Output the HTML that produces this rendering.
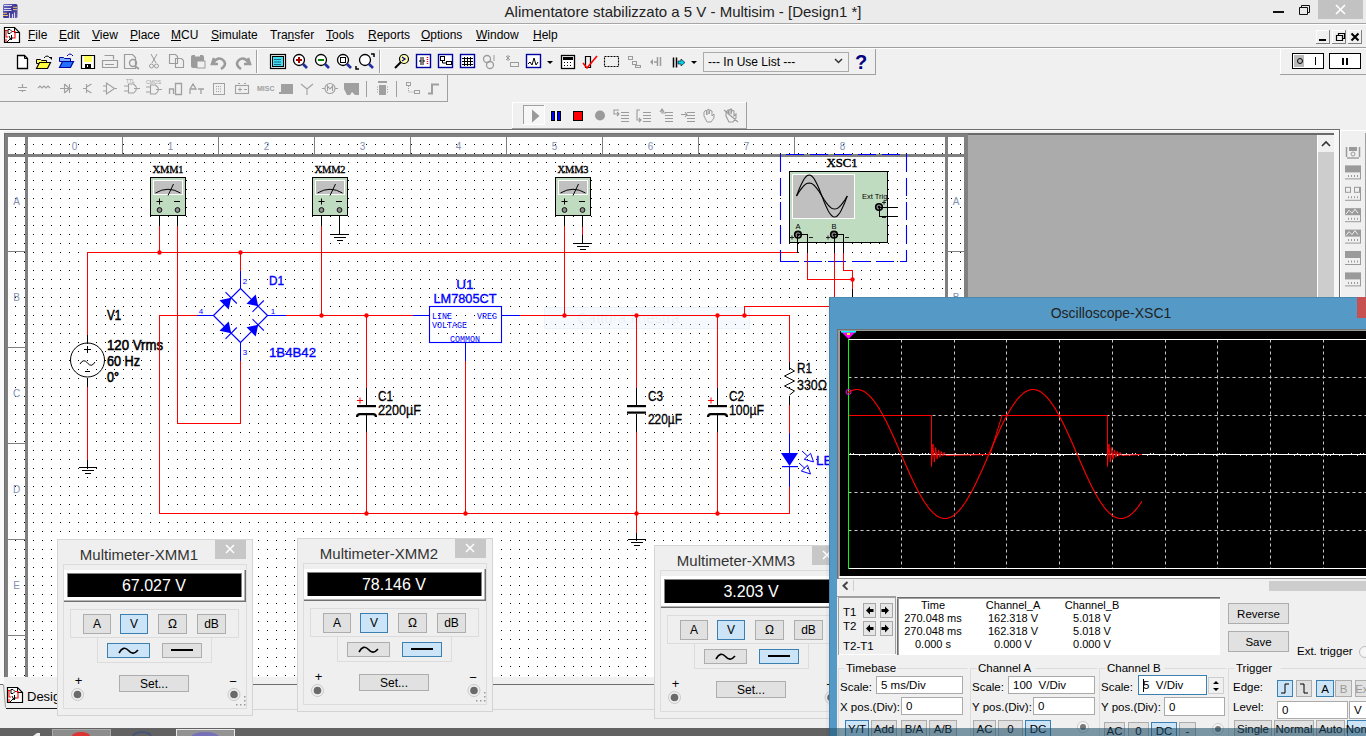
<!DOCTYPE html><html><head><meta charset="utf-8"><style>html,body{margin:0;padding:0;width:1366px;height:736px;overflow:hidden;background:#f0f0f0}svg{display:block}</style></head><body>
<svg width="1366" height="736" viewBox="0 0 1366 736" font-family='"Liberation Sans", sans-serif'>
<rect x="0" y="0" width="1366" height="736" fill="#f0f0f0" />
<rect x="0" y="0" width="1366" height="23" fill="#ebebeb" />
<rect x="0" y="23" width="1366" height="1" fill="#a6a6a6"/>
<rect x="0" y="24" width="1366" height="1" fill="#ffffff"/>
<defs><linearGradient id="appg" x1="0" y1="0" x2="1" y2="1"><stop offset="0" stop-color="#7a78c8"/><stop offset="0.5" stop-color="#3a3495"/><stop offset="1" stop-color="#6a68b8"/></linearGradient></defs>
<rect x="3" y="4" width="14.5" height="14" rx="1.5" fill="url(#appg)"/>
<path d="M4,5.5 h8 M4,8.5 h7 M3.5,10.5 h8" stroke="#e8e8f8" stroke-width="1" opacity="0.9"/>
<path d="M13,7.3 h4 M13,9.6 h4 M3,13.3 h4 M3,15.5 h5" stroke="#f0c060" stroke-width="1"/>
<path d="M9.5,13 v5 M12.5,14 v4 M14.5,12.5 v5.5" stroke="#d8d8f0" stroke-width="1"/>
<text x="683" y="17" font-size="15" fill="#222" text-anchor="middle" font-weight="normal" font-family='"Liberation Sans", sans-serif' >Alimentatore stabilizzato a 5 V - Multisim - [Design1 *]</text>
<rect x="1273" y="11" width="11" height="2" fill="#111" />
<path d="M1299.5,7.5 h8 v7 h-8 z M1301.5,7.5 v-2 h8 v7 h-2" fill="none" stroke="#111" stroke-width="1"/>
<rect x="1318" y="0" width="45" height="19" fill="#c2c2c2" />
<path d="M1336,5 L1345,14 M1345,5 L1336,14" stroke="#fff" stroke-width="1.6"/>
<text x="28" y="39" font-size="12" fill="#000" text-anchor="start" font-weight="normal" font-family='"Liberation Sans", sans-serif' >File</text>
<rect x="28.0" y="40" width="7.3" height="1" fill="#000"/>
<text x="59" y="39" font-size="12" fill="#000" text-anchor="start" font-weight="normal" font-family='"Liberation Sans", sans-serif' >Edit</text>
<rect x="59.0" y="40" width="8.0" height="1" fill="#000"/>
<text x="92" y="39" font-size="12" fill="#000" text-anchor="start" font-weight="normal" font-family='"Liberation Sans", sans-serif' >View</text>
<rect x="92.0" y="40" width="8.0" height="1" fill="#000"/>
<text x="130" y="39" font-size="12" fill="#000" text-anchor="start" font-weight="normal" font-family='"Liberation Sans", sans-serif' >Place</text>
<rect x="130.0" y="40" width="8.0" height="1" fill="#000"/>
<text x="171" y="39" font-size="12" fill="#000" text-anchor="start" font-weight="normal" font-family='"Liberation Sans", sans-serif' >MCU</text>
<rect x="171.0" y="40" width="10.0" height="1" fill="#000"/>
<text x="211" y="39" font-size="12" fill="#000" text-anchor="start" font-weight="normal" font-family='"Liberation Sans", sans-serif' >Simulate</text>
<rect x="211.0" y="40" width="8.0" height="1" fill="#000"/>
<text x="270" y="39" font-size="12" fill="#000" text-anchor="start" font-weight="normal" font-family='"Liberation Sans", sans-serif' >Transfer</text>
<rect x="287.6" y="40" width="6.7" height="1" fill="#000"/>
<text x="326" y="39" font-size="12" fill="#000" text-anchor="start" font-weight="normal" font-family='"Liberation Sans", sans-serif' >Tools</text>
<rect x="326.0" y="40" width="7.3" height="1" fill="#000"/>
<text x="368" y="39" font-size="12" fill="#000" text-anchor="start" font-weight="normal" font-family='"Liberation Sans", sans-serif' >Reports</text>
<rect x="368.0" y="40" width="8.7" height="1" fill="#000"/>
<text x="421" y="39" font-size="12" fill="#000" text-anchor="start" font-weight="normal" font-family='"Liberation Sans", sans-serif' >Options</text>
<rect x="421.0" y="40" width="9.3" height="1" fill="#000"/>
<text x="476" y="39" font-size="12" fill="#000" text-anchor="start" font-weight="normal" font-family='"Liberation Sans", sans-serif' >Window</text>
<rect x="476.0" y="40" width="11.3" height="1" fill="#000"/>
<text x="533" y="39" font-size="12" fill="#000" text-anchor="start" font-weight="normal" font-family='"Liberation Sans", sans-serif' >Help</text>
<rect x="533.0" y="40" width="8.7" height="1" fill="#000"/>
<path d="M4.5,27.5 h10 l5,5 v10 h-15 z" fill="#fff" stroke="#000" stroke-width="1.2"/>
<path d="M14.5,27.5 v5 h5" fill="none" stroke="#000" stroke-width="1"/>
<path d="M5,30.5 h2.5 M6,31 v6 h2 M12,31.5 h3 v6.5 h-2 M6,39 v3" fill="none" stroke="#f00" stroke-width="1.1"/>
<path d="M8,29.5 h2 l2,2 l-2,2 h-2 z M9,36 l2,4 M11.5,35 v5 M9,40 l2,-2 h2 M7,42 l2,-2" fill="none" stroke="#000" stroke-width="1"/>
<rect x="1316" y="30" width="14" height="14" fill="#f0f0f0" />
<rect x="1316" y="30" width="14" height="1" fill="#fff"/>
<rect x="1316" y="30" width="1" height="14" fill="#fff"/>
<rect x="1316" y="43" width="14" height="1" fill="#808080"/>
<rect x="1329" y="30" width="1" height="14" fill="#808080"/>
<rect x="1332" y="30" width="14" height="14" fill="#f0f0f0" />
<rect x="1332" y="30" width="14" height="1" fill="#fff"/>
<rect x="1332" y="30" width="1" height="14" fill="#fff"/>
<rect x="1332" y="43" width="14" height="1" fill="#808080"/>
<rect x="1345" y="30" width="1" height="14" fill="#808080"/>
<rect x="1348" y="30" width="14" height="14" fill="#f0f0f0" />
<rect x="1348" y="30" width="14" height="1" fill="#fff"/>
<rect x="1348" y="30" width="1" height="14" fill="#fff"/>
<rect x="1348" y="43" width="14" height="1" fill="#808080"/>
<rect x="1361" y="30" width="1" height="14" fill="#808080"/>
<rect x="1319" y="39" width="7" height="2" fill="#000" />
<path d="M1336.5,35.5 h6 v5 h-6 z M1338.5,35.5 v-2 h6 v5 h-2" fill="none" stroke="#000" stroke-width="1.2"/>
<path d="M1351.5,33.5 L1358.5,40.5 M1358.5,33.5 L1351.5,40.5" stroke="#000" stroke-width="2"/>
<rect x="0" y="47" width="1366" height="1" fill="#a0a0a0"/>
<rect x="0" y="48" width="1366" height="1" fill="#ffffff"/>
<rect x="0" y="74" width="875" height="1" fill="#a0a0a0"/>
<rect x="875" y="49" width="1" height="26" fill="#a0a0a0"/>
<rect x="0" y="101" width="448" height="1" fill="#a0a0a0"/>
<rect x="447" y="75" width="1" height="27" fill="#a0a0a0"/>
<rect x="512" y="102" width="235" height="1" fill="#ffffff"/>
<rect x="512" y="102" width="1" height="26" fill="#ffffff"/>
<rect x="512" y="128" width="235" height="1" fill="#a0a0a0"/>
<rect x="746" y="102" width="1" height="27" fill="#a0a0a0"/>
<rect x="1280" y="48" width="86" height="1" fill="#ffffff"/>
<rect x="1280" y="48" width="1" height="26" fill="#ffffff"/>
<rect x="1280" y="74" width="86" height="1" fill="#a0a0a0"/>
<rect x="703.5" y="52.5" width="145" height="19" fill="#f0f0f0" stroke="#aaaaaa" stroke-width="1" />
<text x="708" y="66" font-size="12" fill="#000" text-anchor="start" font-weight="normal" font-family='"Liberation Sans", sans-serif' >--- In Use List ---</text>
<path d="M835,59 l3.5,3.5 l3.5,-3.5" fill="none" stroke="#333" stroke-width="1.5"/>
<text x="855" y="69" font-size="20" fill="#000080" text-anchor="start" font-weight="bold" font-family='"Liberation Sans", sans-serif' >?</text>
<rect x="1292.5" y="53.5" width="31" height="15" fill="#fff" stroke="#000"/>
<path d="M1294,55 h10 v12 h-10 z" fill="#bbb"/>
<circle cx="1300" cy="61" r="2.5" fill="none" stroke="#000"/>
<rect x="1315" y="57" width="1" height="8" fill="#000" />
<rect x="1329.5" y="53.5" width="31" height="15" fill="#fff" stroke="#000"/>
<rect x="1342" y="58" width="2" height="7" fill="#000" />
<rect x="1346" y="58" width="2" height="7" fill="#000" />
<rect x="0" y="129" width="1340" height="1" fill="#6d6d6d"/>
<rect x="0" y="130" width="1340" height="1" fill="#ffffff"/>
<path d="M17.5,55.5 h7 l3,3 v10 h-10 z" fill="#fff" stroke="#000" stroke-width="1.3"/>
<path d="M24.5,55.5 v3 h3" fill="none" stroke="#000"/>
<path d="M36.5,59.5 h4 l1,1 h5 v3 h-10 z" fill="#ffff60" stroke="#000"/>
<path d="M36.5,68.5 l3,-6 h11 l-3,6 z" fill="#ffff40" stroke="#000" stroke-width="1.2"/>
<path d="M44,58 q3,-4 6,0" fill="none" stroke="#000"/><path d="M49,57 h3 v3 z" fill="#000"/>
<path d="M59.5,57.5 h4 l1,1 h6 v3 h-11 z" fill="#80b0ff" stroke="#0000a0"/>
<path d="M59.5,67.5 l3,-6 h11 l-3,6 z" fill="#2070ff" stroke="#0000a0" stroke-width="1.2"/>
<path d="M67,56 q3,-4 6,0" fill="none" stroke="#0000a0"/>
<path d="M81.5,55.5 h13 v13 h-13 z" fill="#fff" stroke="#000" stroke-width="1.2"/>
<rect x="84" y="56" width="8" height="6" fill="#ffff60"/><rect x="85" y="64" width="6" height="5" fill="#000"/><rect x="87" y="65" width="1" height="2" fill="#fff"/>
<path d="M104.5,55.5 h9 v4 M102.5,60.5 h15 v7 h-15 z M105,64.5 h9" fill="none" stroke="#9b9b9b" stroke-width="1.2"/>
<path d="M124.5,54.5 h8 l3,3 v11 h-11 z" fill="none" stroke="#9b9b9b" stroke-width="1.2"/><circle cx="133" cy="63" r="3.5" fill="none" stroke="#9b9b9b" stroke-width="1.4"/><path d="M135,66 l4,3" stroke="#9b9b9b" stroke-width="1.6"/>
<path d="M151,54 l5,9 M157,54 l-5,9" stroke="#9b9b9b" stroke-width="1"/><circle cx="151.5" cy="66" r="2" fill="none" stroke="#9b9b9b"/><circle cx="156.5" cy="66" r="2" fill="none" stroke="#9b9b9b"/>
<path d="M169.5,54.5 h6 l2,2 v7 h-8 z M175.5,58.5 h6 l2,2 v7 h-8 z" fill="#f0f0f0" stroke="#9b9b9b" stroke-width="1.1"/>
<rect x="191" y="55" width="13" height="13" rx="2" fill="#9b9b9b"/><rect x="197" y="61" width="8" height="7" fill="#f0f0f0" stroke="#9b9b9b"/><rect x="195" y="55" width="5" height="1.5" fill="#f0f0f0"/>
<path d="M214,58 l-2,6 l6,0 M213,63 q6,-8 11,-2 q3,4 -3,8" fill="none" stroke="#9b9b9b" stroke-width="2.6"/>
<path d="M248,58 l2,6 l-6,0 M249,63 q-6,-8 -11,-2 q-3,4 3,8" fill="none" stroke="#9b9b9b" stroke-width="2.6"/>
<rect x="256" y="50" width="1" height="23" fill="#a0a0a0"/>
<rect x="257" y="50" width="1" height="23" fill="#ffffff"/>
<rect x="270.5" y="54.5" width="15" height="14" fill="none" stroke="#000" stroke-width="1.2"/><rect x="272.5" y="56.5" width="11" height="10" fill="#40e0f0" stroke="#000"/>
<path d="M274,59.5 h7 M274,62 h7 M274,64.5 h7" stroke="#206080" stroke-width="1"/>
<circle cx="299" cy="60" r="5.5" fill="#fff" stroke="#000" stroke-width="1.3"/><path d="M303,64 l4,4" stroke="#2030a0" stroke-width="2.6"/>
<path d="M296,60 h6 M299,57 v6" stroke="#a00000" stroke-width="2"/>
<circle cx="321" cy="60" r="5.5" fill="#fff" stroke="#000" stroke-width="1.3"/><path d="M325,64 l4,4" stroke="#2030a0" stroke-width="2.6"/>
<path d="M318,60 h6" stroke="#008000" stroke-width="2"/>
<circle cx="343" cy="60" r="5.5" fill="#fff" stroke="#000" stroke-width="1.3"/><path d="M347,64 l4,4" stroke="#2030a0" stroke-width="2.6"/>
<rect x="340.5" y="57.5" width="5" height="5" fill="none" stroke="#000"/>
<circle cx="365" cy="60" r="5.5" fill="#fff" stroke="#000" stroke-width="1.3"/><path d="M369,64 l4,4" stroke="#2030a0" stroke-width="2.6"/>
<path d="M371,54 h3 v3 M359,69 h-3 v-3" fill="none" stroke="#000" stroke-width="1.5"/>
<rect x="379" y="50" width="1" height="23" fill="#a0a0a0"/>
<rect x="380" y="50" width="1" height="23" fill="#ffffff"/>
<circle cx="404" cy="59" r="4.5" fill="#ffffa0" stroke="#000" stroke-width="1.2"/><path d="M401,62 l-6,6" stroke="#000" stroke-width="2"/><path d="M402,57 l3,2 l-3,2" fill="none" stroke="#0000a0" stroke-width="1.3"/>
<rect x="416.5" y="54.5" width="14" height="13" fill="#fff" stroke="#0000a0" stroke-width="1.4"/>
<rect x="438.5" y="54.5" width="14" height="13" fill="#fff" stroke="#0000a0" stroke-width="1.4"/>
<rect x="460.5" y="54.5" width="14" height="13" fill="#fff" stroke="#0000a0" stroke-width="1.4"/>
<rect x="526.5" y="54.5" width="14" height="13" fill="#fff" stroke="#0000a0" stroke-width="1.4"/>
<path d="M419,61 h2 M421,57 v8 M423,57 v8 M423,61 h2" stroke="#000" stroke-width="1"/><path d="M427.5,57 v8" stroke="#e00000" stroke-width="1.5" stroke-dasharray="1 1"/>
<rect x="440.5" y="56.5" width="4" height="4" fill="none" stroke="#000"/><rect x="446.5" y="61.5" width="5" height="3" fill="none" stroke="#000"/><path d="M442.5,60 v3 h4" fill="none" stroke="#000"/>
<path d="M462,58.5 h11 M462,61.5 h11 M462,64.5 h11 M464.5,57 v9 M467.5,57 v9 M470.5,57 v9" stroke="#000" stroke-width="1"/>
<path d="M528,64 l2,-2 l2,3 l2,-7 l2,7 l2,-3" fill="none" stroke="#000" stroke-width="1"/>
<circle cx="487" cy="59" r="3.5" fill="none" stroke="#9b9b9b" stroke-width="1.3"/><circle cx="490" cy="65" r="3.5" fill="none" stroke="#9b9b9b" stroke-width="1.3"/><path d="M494,55 v6" stroke="#9b9b9b"/>
<path d="M506,56 l4,4 M510,56 l-4,4 M508,55 v6" stroke="#9b9b9b"/><rect x="510.5" y="62.5" width="8" height="4" fill="none" stroke="#9b9b9b"/>
<path d="M547,61 h6 l-3,3 z" fill="#000"/>
<rect x="561.5" y="55.5" width="13" height="13" fill="#fff" stroke="#000" stroke-width="1.3"/><rect x="563" y="57" width="10" height="3" fill="#000"/>
<path d="M564,62.5 h1 M567,62.5 h1 M570,62.5 h1 M564,65.5 h1 M567,65.5 h1 M570,65.5 h1" stroke="#000" stroke-width="1.2"/>
<path d="M585.5,56.5 h5 v11 h-5 z" fill="none" stroke="#000" stroke-width="1.2"/><path d="M583,63 l4,5 l10,-12" fill="none" stroke="#ff0000" stroke-width="1.6"/>
<rect x="604.5" y="56.5" width="14" height="10" fill="none" stroke="#000" stroke-width="1.1" stroke-dasharray="2 1"/>
<rect x="628.5" y="56.5" width="4" height="3" fill="none" stroke="#9b9b9b"/><rect x="632.5" y="61.5" width="4" height="3" fill="none" stroke="#9b9b9b"/><rect x="635.5" y="65.5" width="5" height="2" fill="none" stroke="#9b9b9b"/>
<path d="M650,62 l3,-3 v6 z" fill="#9b9b9b"/><path d="M654,62 h3 M657.5,57 v9 M660.5,57 v9" stroke="#9b9b9b" stroke-width="1.5"/>
<path d="M673.5,57.5 v10 M676.5,57.5 v10" stroke="#000" stroke-width="1.5"/><path d="M678,61 h3 v-2 l4,3.5 l-4,3.5 v-2 h-3 z" fill="#00d0f0" stroke="#000" stroke-width="0.6"/>
<path d="M691,61 h6 l-3,3 z" fill="#000"/>
<path d="M18,87.5 h9 M22.5,84 v3 M19,90.5 h7 M22.5,90 v2" stroke="#a0a0a0" stroke-width="1.2"/>
<path d="M38,88 l2,-2 l2,2 l2,-2 l2,2 l2,-2 l2,2" fill="none" stroke="#a0a0a0" stroke-width="1.2"/>
<path d="M60,88.5 h12 M64.5,84 v9 M64.5,84 l5,4.5 l-5,4.5 M69.5,84 v9" fill="none" stroke="#a0a0a0" stroke-width="1.1"/>
<path d="M86.5,84 v9 M83,88.5 h3.5 M86.5,87 l5,-3 M86.5,90 l5,3" fill="none" stroke="#a0a0a0" stroke-width="1.1"/>
<path d="M106.5,83 v11 l8,-5.5 z M103,86 h3 M103,91 h3 M114,88.5 h3" fill="none" stroke="#a0a0a0" stroke-width="1.1"/>
<path d="M128.5,84 h5 q6,4.5 0,9 h-5 z M124,86 h4 M124,91 h4 M134,88.5 h6" fill="none" stroke="#a0a0a0" stroke-width="1.1"/><text x="126" y="83" font-size="5" fill="#a0a0a0">TTL</text>
<path d="M150.5,85 h5 q6,4.5 0,9 h-5 z M146,87 h4 M146,92 h4 M156,89.5 h6" fill="none" stroke="#a0a0a0" stroke-width="1.1"/><text x="146" y="84" font-size="5" fill="#a0a0a0">CMOS</text>
<path d="M169.5,94 v-5 h4 v5 M175.5,83.5 h6 v11 h-6 z" fill="none" stroke="#a0a0a0" stroke-width="1.3"/>
<path d="M193,84 l-3,5 h6 z M190,94 v-4 M198,89 h6 M201,89 v5" fill="none" stroke="#a0a0a0" stroke-width="1.3"/>
<rect x="213.5" y="83.5" width="11" height="11" fill="none" stroke="#a0a0a0"/><path d="M216,86.5 h6 M216,89 h6 M216,91.5 h6" stroke="#a0a0a0" stroke-dasharray="1 1"/>
<rect x="235.5" y="85.5" width="13" height="8" fill="none" stroke="#a0a0a0" stroke-width="1.1"/><path d="M238,83.5 h2 M244,83.5 h2 M238,89.5 h4 M240,87.5 v4 M244,89.5 h3" stroke="#a0a0a0"/>
<text x="257" y="91" font-size="7" fill="#a0a0a0" font-weight="bold">MISC</text>
<rect x="281" y="84" width="12" height="8" fill="#a0a0a0"/><rect x="279" y="92" width="14" height="2" fill="#a0a0a0"/>
<path d="M301,84 l6,5 l6,-5 M307,89 v6" fill="none" stroke="#a0a0a0" stroke-width="1.1"/>
<circle cx="330" cy="88.5" r="5" fill="none" stroke="#a0a0a0" stroke-width="1.1"/><path d="M322,88.5 h3 M335,88.5 h3 M327.5,91 v-5 l2.5,3 l2.5,-3 v5" fill="none" stroke="#a0a0a0" stroke-width="1.1"/>
<path d="M344,83 h15 v12 h-4 l-3,-3 l-2,3 h-3 l-3,-6 z" fill="#a0a0a0"/>
<rect x="366" y="81" width="1" height="16" fill="#a0a0a0"/>
<rect x="379" y="85" width="7" height="10" fill="#a0a0a0"/><path d="M377,87 h11 M377,89.5 h11 M377,92 h11" stroke="#a0a0a0" stroke-dasharray="1 1"/><rect x="378" y="81" width="9" height="2" fill="#a0a0a0"/>
<rect x="396" y="81" width="1" height="16" fill="#a0a0a0"/>
<rect x="406.5" y="82.5" width="4" height="3" fill="none" stroke="#a0a0a0"/><rect x="414.5" y="90.5" width="5" height="3" fill="none" stroke="#a0a0a0"/><path d="M408.5,86 v6 h5" fill="none" stroke="#a0a0a0" stroke-dasharray="1 1"/>
<path d="M428,93.5 h4 v-9 h7" fill="none" stroke="#a0a0a0" stroke-width="2"/>
<rect x="523" y="105" width="21" height="20" fill="#f7f7f7"/>
<rect x="523" y="105" width="21" height="1" fill="#a0a0a0"/>
<rect x="523" y="105" width="1" height="20" fill="#a0a0a0"/>
<rect x="523" y="124" width="22" height="1" fill="#ffffff"/>
<rect x="544" y="105" width="1" height="20" fill="#ffffff"/>
<path d="M532,109.5 l7.5,6.5 l-7.5,6.5 z" fill="#9a9a9a"/>
<rect x="551.5" y="111.5" width="3" height="9" fill="#0000ff" stroke="#000"/><rect x="557.5" y="111.5" width="3" height="9" fill="#0000ff" stroke="#000"/>
<rect x="573.5" y="111.5" width="9" height="9" fill="#ff0000" stroke="#000"/>
<circle cx="600" cy="115.5" r="5" fill="#9a9a9a"/>
<path d="M621,112.5 h8 M621,115.5 h8 M621,118.5 h8 M621,121.5 h8" stroke="#9b9b9b" stroke-width="1"/>
<path d="M643,112.5 h8 M643,115.5 h8 M643,118.5 h8 M643,121.5 h8" stroke="#9b9b9b" stroke-width="1"/>
<path d="M665,112.5 h8 M665,115.5 h8 M665,118.5 h8 M665,121.5 h8" stroke="#9b9b9b" stroke-width="1"/>
<path d="M687,112.5 h8 M687,115.5 h8 M687,118.5 h8 M687,121.5 h8" stroke="#9b9b9b" stroke-width="1"/>
<path d="M619,110 h-5 v4 h5 M617,112 l2,2 l-2,2" fill="none" stroke="#9b9b9b" stroke-width="1.1"/>
<path d="M640,110 h-3 v10 h3 M639,118 l2,2 l-2,2" fill="none" stroke="#9b9b9b" stroke-width="1.1"/>
<path d="M660,112 l2,-3 l2,3 M662,109 v4 h4" fill="none" stroke="#9b9b9b" stroke-width="1.1"/>
<path d="M681,114.5 h6 M685,112 l2,2.5 l-2,2.5" fill="none" stroke="#9b9b9b" stroke-width="1.1"/>
<path d="M704,116 v-4 l2,-2 l1,5 v-5 l2,-1 v5 l1,-4 l2,1 v5 l2,-2 v4 l-3,4 h-4 z" fill="none" stroke="#9b9b9b" stroke-width="1"/>
<path d="M726,116 v-4 l2,-2 l1,5 v-5 l2,-1 v5 l1,-4 l2,1 v5 l2,-2 v4 l-3,4 h-4 z M724,110 l14,12" fill="none" stroke="#9b9b9b" stroke-width="1.1"/>
<rect x="968" y="131" width="372" height="4" fill="#f0f0f0" />
<rect x="968" y="133" width="366" height="2" fill="#6a6a6a" />
<rect x="968" y="135" width="349" height="162" fill="#ababab" />
<rect x="1317" y="135" width="1" height="162" fill="#ffffff"/>
<rect x="1318" y="135" width="16" height="162" fill="#cdcdcd" />
<rect x="1318" y="135" width="16" height="17" fill="#f0f0f0" />
<path d="M1322,146 l4,-4 l4,4" fill="none" stroke="#333" stroke-width="1.6"/>
<rect x="1334" y="131" width="5" height="166" fill="#f7f7f7" />
<rect x="1339" y="129" width="1" height="168" fill="#6d6d6d"/>
<rect x="1340" y="130" width="26" height="167" fill="#f0f0f0" />
<rect x="1340" y="130" width="26" height="1" fill="#ffffff"/>
<rect x="1340" y="130" width="1" height="167" fill="#ffffff"/>
<rect x="1365" y="133" width="1" height="164" fill="#a0a0a0"/>
<path d="M1346.5,147 v10 M1359.5,147 v10" stroke="#9a9a9a" stroke-width="1.5"/><rect x="1349" y="147" width="8" height="4" fill="#9a9a9a"/><circle cx="1353" cy="154" r="2" fill="none" stroke="#9a9a9a"/><path d="M1347,158 h12" stroke="#9a9a9a" stroke-width="1.4"/>
<rect x="1345" y="165.4" width="15" height="7" fill="#9a9a9a"/>
<path d="M1345,178.9 h15 M1360.5,165.4 v14" stroke="#9a9a9a" stroke-width="1"/>
<path d="M1348,175.9 h1 M1351,175.9 h1 M1354,175.9 h1 M1357,175.9 h1" stroke="#9a9a9a" stroke-width="2"/>
<rect x="1345.5" y="187.3" width="5" height="5" fill="none" stroke="#9a9a9a"/><rect x="1354.5" y="187.3" width="5" height="5" fill="none" stroke="#9a9a9a"/>
<path d="M1345,200.3 h15 M1360.5,186.8 v14" stroke="#9a9a9a" stroke-width="1"/>
<path d="M1348,197.3 h1 M1351,197.3 h1 M1354,197.3 h1 M1357,197.3 h1" stroke="#9a9a9a" stroke-width="2"/>
<rect x="1345" y="208.2" width="15" height="7" fill="#9a9a9a"/>
<path d="M1346,214.2 l3,-4 l3,3 l3,-4 l3,4" fill="none" stroke="#f0f0f0" stroke-width="1"/>
<path d="M1345,221.7 h15 M1360.5,208.2 v14" stroke="#9a9a9a" stroke-width="1"/>
<path d="M1348,218.7 h1 M1351,218.7 h1 M1354,218.7 h1 M1357,218.7 h1" stroke="#9a9a9a" stroke-width="2"/>
<rect x="1345" y="229.6" width="15" height="7" fill="#9a9a9a"/>
<path d="M1346,235.6 l3,-4 l3,3 l3,-4 l3,4" fill="none" stroke="#f0f0f0" stroke-width="1"/>
<path d="M1345,243.1 h15 M1360.5,229.6 v14" stroke="#9a9a9a" stroke-width="1"/>
<path d="M1348,240.1 h1 M1351,240.1 h1 M1354,240.1 h1 M1357,240.1 h1" stroke="#9a9a9a" stroke-width="2"/>
<rect x="1345" y="251.0" width="15" height="7" fill="#9a9a9a"/>
<path d="M1345,264.5 h15 M1360.5,251.0 v14" stroke="#9a9a9a" stroke-width="1"/>
<path d="M1348,261.5 h1 M1351,261.5 h1 M1354,261.5 h1 M1357,261.5 h1" stroke="#9a9a9a" stroke-width="2"/>
<rect x="1345" y="272.4" width="15" height="7" fill="#9a9a9a"/>
<path d="M1345,285.9 h15 M1360.5,272.4 v14" stroke="#9a9a9a" stroke-width="1"/>
<path d="M1348,282.9 h1 M1351,282.9 h1 M1354,282.9 h1 M1357,282.9 h1" stroke="#9a9a9a" stroke-width="2"/>
<rect x="0" y="677" width="1340" height="51" fill="#f0f0f0" />
<rect x="0" y="684" width="3" height="1" fill="#6d6d6d"/>
<rect x="90" y="684" width="1250" height="1" fill="#6d6d6d"/>
<path d="M3.5,684.5 L5.5,707.5" fill="none" stroke="#9a9a9a"/>
<rect x="6" y="708" width="84" height="1" fill="#1a1a1a"/>
<rect x="90" y="709" width="1250" height="1" fill="#d6d6d6"/>
<path d="M7.5,687.5 h10 l5,5 v10 h-15 z" fill="#fff" stroke="#000" stroke-width="1.2"/>
<path d="M17.5,687.5 v5 h5" fill="none" stroke="#000" stroke-width="1"/>
<path d="M8,690.5 h2.5 M9,691 v6 h2 M15,691.5 h3 v6.5 h-2 M9,699 v3" fill="none" stroke="#f00" stroke-width="1.1"/>
<path d="M11,689.5 h2 l2,2 l-2,2 h-2 z M12,696 l2,4 M14.5,695 v5 M12,700 l2,-2 h2 M10,702 l2,-2" fill="none" stroke="#000" stroke-width="1"/>
<text x="27" y="701" font-size="13" fill="#000" text-anchor="start" font-weight="normal" font-family='"Liberation Sans", sans-serif' >Design1</text>
<rect x="0" y="728" width="1366" height="8" fill="#626262" />
<rect x="52.5" y="729.5" width="58" height="8" fill="#8c8c8c" stroke="#a8a8a8"/>
<rect x="176.5" y="729.5" width="58" height="8" fill="#939393" stroke="#e8e8e8"/>
<path d="M33,736 l4,-3 h3 v3 z" fill="#eee"/>
<ellipse cx="81" cy="736" rx="9" ry="4" fill="#d33"/>
<ellipse cx="142" cy="737" rx="9" ry="5" fill="none" stroke="#457" stroke-width="2"/>
<ellipse cx="205" cy="737" rx="14" ry="5" fill="#7570b8"/>
<rect x="0" y="131" width="4" height="553" fill="#fafafa" />
<rect x="8" y="137" width="956" height="540" fill="#ffffff" />
<defs><pattern id="grid" x="0" y="0" width="9" height="9" patternUnits="userSpaceOnUse"><rect x="6" y="0" width="1" height="1" fill="#000"/></pattern><clipPath id="schclip"><rect x="8" y="137" width="956" height="540"/></clipPath></defs>
<rect x="8" y="137" width="956" height="540" fill="url(#grid)" />
<rect x="4" y="133" width="4" height="544" fill="#808080" />
<rect x="4" y="133" width="964" height="4" fill="#808080" />
<rect x="964" y="133" width="4" height="544" fill="#808080" />
<rect x="4" y="133" width="964" height="1" fill="#707070" />
<rect x="4" y="133" width="1" height="544" fill="#707070" />
<rect x="25" y="137" width="3" height="540" fill="#808080" />
<rect x="8" y="154" width="956" height="3" fill="#808080" />
<rect x="945" y="137" width="3" height="540" fill="#808080" />
<text x="74.5" y="150" font-size="10" fill="#8090b0" text-anchor="middle" font-weight="normal" font-family='"Liberation Sans", sans-serif' >0</text>
<rect x="122" y="137" width="1" height="17" fill="#808080"/>
<text x="170.5" y="150" font-size="10" fill="#8090b0" text-anchor="middle" font-weight="normal" font-family='"Liberation Sans", sans-serif' >1</text>
<rect x="218" y="137" width="1" height="17" fill="#808080"/>
<text x="266.5" y="150" font-size="10" fill="#8090b0" text-anchor="middle" font-weight="normal" font-family='"Liberation Sans", sans-serif' >2</text>
<rect x="314" y="137" width="1" height="17" fill="#808080"/>
<text x="362.5" y="150" font-size="10" fill="#8090b0" text-anchor="middle" font-weight="normal" font-family='"Liberation Sans", sans-serif' >3</text>
<rect x="410" y="137" width="1" height="17" fill="#808080"/>
<text x="458.5" y="150" font-size="10" fill="#8090b0" text-anchor="middle" font-weight="normal" font-family='"Liberation Sans", sans-serif' >4</text>
<rect x="506" y="137" width="1" height="17" fill="#808080"/>
<text x="554.5" y="150" font-size="10" fill="#8090b0" text-anchor="middle" font-weight="normal" font-family='"Liberation Sans", sans-serif' >5</text>
<rect x="602" y="137" width="1" height="17" fill="#808080"/>
<text x="650.5" y="150" font-size="10" fill="#8090b0" text-anchor="middle" font-weight="normal" font-family='"Liberation Sans", sans-serif' >6</text>
<rect x="698" y="137" width="1" height="17" fill="#808080"/>
<text x="746.5" y="150" font-size="10" fill="#8090b0" text-anchor="middle" font-weight="normal" font-family='"Liberation Sans", sans-serif' >7</text>
<rect x="794" y="137" width="1" height="17" fill="#808080"/>
<text x="842.5" y="150" font-size="10" fill="#8090b0" text-anchor="middle" font-weight="normal" font-family='"Liberation Sans", sans-serif' >8</text>
<rect x="8" y="251" width="17" height="1" fill="#808080"/>
<rect x="948" y="251" width="16" height="1" fill="#808080"/>
<text x="16.5" y="205" font-size="10" fill="#8090b0" text-anchor="middle" font-weight="normal" font-family='"Liberation Sans", sans-serif' >A</text>
<text x="956" y="205" font-size="10" fill="#8090b0" text-anchor="middle" font-weight="normal" font-family='"Liberation Sans", sans-serif' >A</text>
<rect x="8" y="347" width="17" height="1" fill="#808080"/>
<rect x="948" y="347" width="16" height="1" fill="#808080"/>
<text x="16.5" y="301" font-size="10" fill="#8090b0" text-anchor="middle" font-weight="normal" font-family='"Liberation Sans", sans-serif' >B</text>
<text x="956" y="301" font-size="10" fill="#8090b0" text-anchor="middle" font-weight="normal" font-family='"Liberation Sans", sans-serif' >B</text>
<rect x="8" y="443" width="17" height="1" fill="#808080"/>
<rect x="948" y="443" width="16" height="1" fill="#808080"/>
<text x="16.5" y="397" font-size="10" fill="#8090b0" text-anchor="middle" font-weight="normal" font-family='"Liberation Sans", sans-serif' >C</text>
<text x="956" y="397" font-size="10" fill="#8090b0" text-anchor="middle" font-weight="normal" font-family='"Liberation Sans", sans-serif' >C</text>
<rect x="8" y="539" width="17" height="1" fill="#808080"/>
<rect x="948" y="539" width="16" height="1" fill="#808080"/>
<text x="16.5" y="493" font-size="10" fill="#8090b0" text-anchor="middle" font-weight="normal" font-family='"Liberation Sans", sans-serif' >D</text>
<text x="956" y="493" font-size="10" fill="#8090b0" text-anchor="middle" font-weight="normal" font-family='"Liberation Sans", sans-serif' >D</text>
<rect x="8" y="635" width="17" height="1" fill="#808080"/>
<rect x="948" y="635" width="16" height="1" fill="#808080"/>
<text x="16.5" y="589" font-size="10" fill="#8090b0" text-anchor="middle" font-weight="normal" font-family='"Liberation Sans", sans-serif' >E</text>
<text x="956" y="589" font-size="10" fill="#8090b0" text-anchor="middle" font-weight="normal" font-family='"Liberation Sans", sans-serif' >E</text>
<g clip-path="url(#schclip)">
<rect x="544.5" y="307.5" width="205" height="21" fill="#e4eef8" fill-opacity="0.35" stroke="#dde8f3" stroke-opacity="0.5"/>
<path d="M87.5,334.5 L87.5,252.5 L797.5,252.5" fill="none" stroke="#ff0000" stroke-width="1" shape-rendering="crispEdges"/>
<path d="M87.5,334.5 L87.5,343.5" fill="none" stroke="#000000" stroke-width="1" shape-rendering="crispEdges"/>
<circle cx="87.5" cy="360" r="17" fill="none" stroke="#000" stroke-width="1"/>
<path d="M84,349.5 h7 M87.5,346 v7" stroke="#000" stroke-width="1"/>
<path d="M80,364 Q83.5,358 87.5,363 Q91.5,368 95,362" fill="none" stroke="#000" stroke-width="1"/>
<path d="M85,371.5 h5" stroke="#000" stroke-width="1"/>
<path d="M87.5,377.5 L87.5,386.5" fill="none" stroke="#000000" stroke-width="1" shape-rendering="crispEdges"/>
<path d="M87.5,386.5 L87.5,459.5" fill="none" stroke="#ff0000" stroke-width="1" shape-rendering="crispEdges"/>
<path d="M87.5,459.5 L87.5,467.5" fill="none" stroke="#000000" stroke-width="1" shape-rendering="crispEdges"/>
<path d="M78.5,467.5 L96.5,467.5" fill="none" stroke="#000000" stroke-width="1" shape-rendering="crispEdges"/>
<path d="M81.5,470.5 L93.5,470.5" fill="none" stroke="#000000" stroke-width="1" shape-rendering="crispEdges"/>
<path d="M84.5,473.5 L90.5,473.5" fill="none" stroke="#000000" stroke-width="1" shape-rendering="crispEdges"/>
<text x="107" y="320" font-size="14" fill="#000" text-anchor="start" font-weight="normal" font-family='"Liberation Sans", sans-serif' stroke="#000" stroke-width="0.55" textLength="14" lengthAdjust="spacingAndGlyphs">V1</text>
<text x="107" y="350" font-size="14" fill="#000" text-anchor="start" font-weight="normal" font-family='"Liberation Sans", sans-serif' stroke="#000" stroke-width="0.55" textLength="56" lengthAdjust="spacingAndGlyphs">120 Vrms</text>
<text x="107" y="366" font-size="14" fill="#000" text-anchor="start" font-weight="normal" font-family='"Liberation Sans", sans-serif' stroke="#000" stroke-width="0.55" textLength="33" lengthAdjust="spacingAndGlyphs">60 Hz</text>
<text x="107" y="381.5" font-size="14" fill="#000" text-anchor="start" font-weight="normal" font-family='"Liberation Sans", sans-serif' stroke="#000" stroke-width="0.55" textLength="12" lengthAdjust="spacingAndGlyphs">0°</text>
<text x="168" y="173" font-size="11" fill="#000" text-anchor="middle" font-weight="normal" font-family='"Liberation Serif", serif' stroke="#000" stroke-width="0.35" textLength="31" lengthAdjust="spacingAndGlyphs">XMM1</text>
<rect x="150.5" y="177.5" width="35" height="38" fill="#c0dcc0" stroke="#000"/>
<rect x="153.5" y="180.5" width="29" height="14" fill="#c0c0c0" stroke="#fff"/>
<path d="M155.5,193 Q168,185.5 180.5,193" fill="none" stroke="#000" stroke-width="1"/>
<path d="M168,195.5 L173.5,184" stroke="#000" stroke-width="1"/>
<path d="M156.5,201.5 h6 M159.5,198.5 v6 M174,201.5 h6" stroke="#000" stroke-width="1"/>
<circle cx="159.5" cy="210" r="2.4" fill="#909090" stroke="#000" stroke-width="0.9"/>
<circle cx="177.5" cy="210" r="2.4" fill="#909090" stroke="#000" stroke-width="0.9"/>
<path d="M159.5,215.5 L159.5,225.5" fill="none" stroke="#000000" stroke-width="1" shape-rendering="crispEdges"/>
<path d="M159.5,225.5 L159.5,252.5" fill="none" stroke="#ff0000" stroke-width="1" shape-rendering="crispEdges"/>
<circle cx="159.5" cy="252.5" r="2.2" fill="#ff0000"/>
<path d="M177.5,215.5 L177.5,225.5" fill="none" stroke="#000000" stroke-width="1" shape-rendering="crispEdges"/>
<path d="M177.5,225.5 L177.5,423.5 L240.5,423.5 L240.5,360.5" fill="none" stroke="#ff0000" stroke-width="1" shape-rendering="crispEdges"/>
<circle cx="240.5" cy="252.5" r="2.2" fill="#ff0000"/>
<path d="M240.5,252.5 L240.5,270.5" fill="none" stroke="#ff0000" stroke-width="1" shape-rendering="crispEdges"/>
<path d="M240.5,270.5 L240.5,288.5" fill="none" stroke="#0000ff" stroke-width="1" shape-rendering="crispEdges"/>
<path d="M240.5,342.5 L240.5,360.5" fill="none" stroke="#0000ff" stroke-width="1" shape-rendering="crispEdges"/>
<path d="M196.5,315.5 L159.5,315.5 L159.5,513.5 L789.5,513.5 L789.5,486.5" fill="none" stroke="#ff0000" stroke-width="1" shape-rendering="crispEdges"/>
<path d="M196.5,315.5 L213.5,315.5" fill="none" stroke="#0000ff" stroke-width="1" shape-rendering="crispEdges"/>
<path d="M267.5,315.5 L285.5,315.5" fill="none" stroke="#0000ff" stroke-width="1" shape-rendering="crispEdges"/>
<path d="M285.5,315.5 L412.5,315.5" fill="none" stroke="#ff0000" stroke-width="1" shape-rendering="crispEdges"/>
<path d="M412.5,315.5 L429.5,315.5" fill="none" stroke="#0000ff" stroke-width="1" shape-rendering="crispEdges"/>
<line x1="213.5" y1="315.5" x2="240.5" y2="288.5" stroke="#0000ff" stroke-width="1.1"/>
<path d="M228.7,309.5 L219.5,300.3 L231.2,297.8 z" fill="#0000ff"/>
<line x1="236.8" y1="303.5" x2="225.5" y2="292.2" stroke="#0000ff" stroke-width="1.1"/>
<line x1="240.5" y1="288.5" x2="267.5" y2="315.5" stroke="#0000ff" stroke-width="1.1"/>
<path d="M246.5,303.7 L255.7,294.5 L258.2,306.2 z" fill="#0000ff"/>
<line x1="252.5" y1="311.8" x2="263.8" y2="300.5" stroke="#0000ff" stroke-width="1.1"/>
<line x1="213.5" y1="315.5" x2="240.5" y2="342.5" stroke="#0000ff" stroke-width="1.1"/>
<path d="M219.5,330.7 L228.7,321.5 L231.2,333.2 z" fill="#0000ff"/>
<line x1="225.5" y1="338.8" x2="236.8" y2="327.5" stroke="#0000ff" stroke-width="1.1"/>
<line x1="240.5" y1="342.5" x2="267.5" y2="315.5" stroke="#0000ff" stroke-width="1.1"/>
<path d="M255.7,336.5 L246.5,327.3 L258.2,324.8 z" fill="#0000ff"/>
<line x1="263.8" y1="330.5" x2="252.5" y2="319.2" stroke="#0000ff" stroke-width="1.1"/>
<text x="245" y="284" font-size="8" fill="#0000ff" text-anchor="middle" font-weight="normal" font-family='"Liberation Sans", sans-serif' >2</text>
<text x="201" y="314" font-size="8" fill="#0000ff" text-anchor="middle" font-weight="normal" font-family='"Liberation Sans", sans-serif' >4</text>
<text x="273" y="314" font-size="8" fill="#0000ff" text-anchor="middle" font-weight="normal" font-family='"Liberation Sans", sans-serif' >1</text>
<text x="245" y="355" font-size="8" fill="#0000ff" text-anchor="middle" font-weight="normal" font-family='"Liberation Sans", sans-serif' >3</text>
<text x="269" y="285" font-size="13" fill="#0000ff" text-anchor="start" font-weight="normal" font-family='"Liberation Sans", sans-serif' stroke="#00f" stroke-width="0.35" textLength="15" lengthAdjust="spacingAndGlyphs">D1</text>
<text x="269" y="357" font-size="13" fill="#0000ff" text-anchor="start" font-weight="normal" font-family='"Liberation Sans", sans-serif' stroke="#00f" stroke-width="0.35" textLength="47" lengthAdjust="spacingAndGlyphs">1B4B42</text>
<text x="330" y="173" font-size="11" fill="#000" text-anchor="middle" font-weight="normal" font-family='"Liberation Serif", serif' stroke="#000" stroke-width="0.35" textLength="31" lengthAdjust="spacingAndGlyphs">XMM2</text>
<rect x="312.5" y="177.5" width="35" height="38" fill="#c0dcc0" stroke="#000"/>
<rect x="315.5" y="180.5" width="29" height="14" fill="#c0c0c0" stroke="#fff"/>
<path d="M317.5,193 Q330,185.5 342.5,193" fill="none" stroke="#000" stroke-width="1"/>
<path d="M330,195.5 L335.5,184" stroke="#000" stroke-width="1"/>
<path d="M318.5,201.5 h6 M321.5,198.5 v6 M336,201.5 h6" stroke="#000" stroke-width="1"/>
<circle cx="321.5" cy="210" r="2.4" fill="#909090" stroke="#000" stroke-width="0.9"/>
<circle cx="339.5" cy="210" r="2.4" fill="#909090" stroke="#000" stroke-width="0.9"/>
<path d="M321.5,215.5 L321.5,225.5" fill="none" stroke="#000000" stroke-width="1" shape-rendering="crispEdges"/>
<path d="M321.5,225.5 L321.5,315.5" fill="none" stroke="#ff0000" stroke-width="1" shape-rendering="crispEdges"/>
<circle cx="321.5" cy="315.5" r="2.2" fill="#ff0000"/>
<path d="M339.5,215.5 L339.5,234.5" fill="none" stroke="#000000" stroke-width="1" shape-rendering="crispEdges"/>
<path d="M330.5,234.5 L348.5,234.5" fill="none" stroke="#000000" stroke-width="1" shape-rendering="crispEdges"/>
<path d="M333.5,237.5 L345.5,237.5" fill="none" stroke="#000000" stroke-width="1" shape-rendering="crispEdges"/>
<path d="M336.5,240.5 L342.5,240.5" fill="none" stroke="#000000" stroke-width="1" shape-rendering="crispEdges"/>
<circle cx="366.5" cy="315.5" r="2.2" fill="#ff0000"/>
<path d="M366.5,315.5 L366.5,387.5" fill="none" stroke="#ff0000" stroke-width="1" shape-rendering="crispEdges"/>
<path d="M366.5,387.5 L366.5,406.5" fill="none" stroke="#000000" stroke-width="1" shape-rendering="crispEdges"/>
<rect x="357" y="405" width="19" height="2.2" fill="#000"/>
<rect x="357" y="406" width="19" height="1" fill="#000"/>
<path d="M357,417 Q357,414.2 360,414.2 H373 Q376,414.2 376,417" fill="none" stroke="#000" stroke-width="2.2"/>
<path d="M366.5,412.5 L366.5,431.5" fill="none" stroke="#000000" stroke-width="1" shape-rendering="crispEdges"/>
<path d="M357,400.5 h6 M360,397.5 v6" stroke="#f00" stroke-width="1"/>
<path d="M366.5,431.5 L366.5,513.5" fill="none" stroke="#ff0000" stroke-width="1" shape-rendering="crispEdges"/>
<circle cx="366.5" cy="513.5" r="2.2" fill="#ff0000"/>
<text x="378" y="401" font-size="14" fill="#000" text-anchor="start" font-weight="normal" font-family='"Liberation Sans", sans-serif' stroke="#000" stroke-width="0.3" textLength="15" lengthAdjust="spacingAndGlyphs">C1</text>
<text x="378" y="415" font-size="14" fill="#000" text-anchor="start" font-weight="normal" font-family='"Liberation Sans", sans-serif' stroke="#000" stroke-width="0.3" textLength="43" lengthAdjust="spacingAndGlyphs">2200µF</text>
<rect x="429.5" y="306.5" width="72" height="36" fill="none" stroke="#0000ff" stroke-width="1.1"/>
<path d="M465.5,342.5 L465.5,360.5" fill="none" stroke="#0000ff" stroke-width="1" shape-rendering="crispEdges"/>
<path d="M465.5,360.5 L465.5,513.5" fill="none" stroke="#ff0000" stroke-width="1" shape-rendering="crispEdges"/>
<circle cx="465.5" cy="513.5" r="2.2" fill="#ff0000"/>
<path d="M501.5,315.5 L519.5,315.5" fill="none" stroke="#0000ff" stroke-width="1" shape-rendering="crispEdges"/>
<path d="M519.5,315.5 L789.5,315.5 L789.5,361.5" fill="none" stroke="#ff0000" stroke-width="1" shape-rendering="crispEdges"/>
<text x="465" y="289" font-size="13.5" fill="#0000ff" text-anchor="middle" font-weight="normal" font-family='"Liberation Sans", sans-serif' stroke="#00f" stroke-width="0.35">U1</text>
<text x="465" y="303" font-size="13.5" fill="#0000ff" text-anchor="middle" font-weight="normal" font-family='"Liberation Sans", sans-serif' stroke="#00f" stroke-width="0.35" textLength="63" lengthAdjust="spacingAndGlyphs">LM7805CT</text>
<text x="432" y="319" font-size="8.5" fill="#0000ff" text-anchor="start" font-weight="normal" font-family='"Liberation Mono", monospace' textLength="20" lengthAdjust="spacingAndGlyphs">LINE</text>
<text x="432" y="327.5" font-size="8.5" fill="#0000ff" text-anchor="start" font-weight="normal" font-family='"Liberation Mono", monospace' textLength="35" lengthAdjust="spacingAndGlyphs">VOLTAGE</text>
<text x="477" y="319" font-size="8.5" fill="#0000ff" text-anchor="start" font-weight="normal" font-family='"Liberation Mono", monospace' textLength="20" lengthAdjust="spacingAndGlyphs">VREG</text>
<text x="450" y="341.5" font-size="8.5" fill="#0000ff" text-anchor="start" font-weight="normal" font-family='"Liberation Mono", monospace' textLength="30" lengthAdjust="spacingAndGlyphs">COMMON</text>
<text x="573" y="173" font-size="11" fill="#000" text-anchor="middle" font-weight="normal" font-family='"Liberation Serif", serif' stroke="#000" stroke-width="0.35" textLength="31" lengthAdjust="spacingAndGlyphs">XMM3</text>
<rect x="555.5" y="177.5" width="35" height="38" fill="#c0dcc0" stroke="#000"/>
<rect x="558.5" y="180.5" width="29" height="14" fill="#c0c0c0" stroke="#fff"/>
<path d="M560.5,193 Q573,185.5 585.5,193" fill="none" stroke="#000" stroke-width="1"/>
<path d="M573,195.5 L578.5,184" stroke="#000" stroke-width="1"/>
<path d="M561.5,201.5 h6 M564.5,198.5 v6 M579,201.5 h6" stroke="#000" stroke-width="1"/>
<circle cx="564.5" cy="210" r="2.4" fill="#909090" stroke="#000" stroke-width="0.9"/>
<circle cx="582.5" cy="210" r="2.4" fill="#909090" stroke="#000" stroke-width="0.9"/>
<path d="M564.5,215.5 L564.5,225.5" fill="none" stroke="#000000" stroke-width="1" shape-rendering="crispEdges"/>
<path d="M564.5,225.5 L564.5,315.5" fill="none" stroke="#ff0000" stroke-width="1" shape-rendering="crispEdges"/>
<circle cx="564.5" cy="315.5" r="2.2" fill="#ff0000"/>
<path d="M582.5,215.5 L582.5,226.5" fill="none" stroke="#000000" stroke-width="1" shape-rendering="crispEdges"/>
<path d="M582.5,226.5 L582.5,234.5" fill="none" stroke="#ff0000" stroke-width="1" shape-rendering="crispEdges"/>
<path d="M582.5,234.5 L582.5,243.5" fill="none" stroke="#000000" stroke-width="1" shape-rendering="crispEdges"/>
<path d="M573.5,243.5 L591.5,243.5" fill="none" stroke="#000000" stroke-width="1" shape-rendering="crispEdges"/>
<path d="M576.5,246.5 L588.5,246.5" fill="none" stroke="#000000" stroke-width="1" shape-rendering="crispEdges"/>
<path d="M579.5,249.5 L585.5,249.5" fill="none" stroke="#000000" stroke-width="1" shape-rendering="crispEdges"/>
<circle cx="636.5" cy="315.5" r="2.2" fill="#ff0000"/>
<path d="M636.5,315.5 L636.5,387.5" fill="none" stroke="#ff0000" stroke-width="1" shape-rendering="crispEdges"/>
<path d="M636.5,387.5 L636.5,406.5" fill="none" stroke="#000000" stroke-width="1" shape-rendering="crispEdges"/>
<rect x="627" y="405" width="19" height="2.2" fill="#000"/>
<rect x="627" y="411.5" width="19" height="2.2" fill="#000"/>
<path d="M636.5,413.5 L636.5,431.5" fill="none" stroke="#000000" stroke-width="1" shape-rendering="crispEdges"/>
<path d="M636.5,431.5 L636.5,532.5" fill="none" stroke="#ff0000" stroke-width="1" shape-rendering="crispEdges"/>
<circle cx="636.5" cy="513.5" r="2.2" fill="#ff0000"/>
<path d="M636.5,532.5 L636.5,539.5" fill="none" stroke="#000000" stroke-width="1" shape-rendering="crispEdges"/>
<path d="M627.5,539.5 L645.5,539.5" fill="none" stroke="#000000" stroke-width="1" shape-rendering="crispEdges"/>
<path d="M630.5,542.5 L642.5,542.5" fill="none" stroke="#000000" stroke-width="1" shape-rendering="crispEdges"/>
<path d="M633.5,545.5 L639.5,545.5" fill="none" stroke="#000000" stroke-width="1" shape-rendering="crispEdges"/>
<text x="648" y="401" font-size="14" fill="#000" text-anchor="start" font-weight="normal" font-family='"Liberation Sans", sans-serif' stroke="#000" stroke-width="0.3" textLength="15" lengthAdjust="spacingAndGlyphs">C3</text>
<text x="648" y="424" font-size="14" fill="#000" text-anchor="start" font-weight="normal" font-family='"Liberation Sans", sans-serif' stroke="#000" stroke-width="0.3" textLength="34" lengthAdjust="spacingAndGlyphs">220µF</text>
<circle cx="717.5" cy="315.5" r="2.2" fill="#ff0000"/>
<path d="M717.5,315.5 L717.5,387.5" fill="none" stroke="#ff0000" stroke-width="1" shape-rendering="crispEdges"/>
<path d="M717.5,387.5 L717.5,406.5" fill="none" stroke="#000000" stroke-width="1" shape-rendering="crispEdges"/>
<rect x="708" y="405" width="19" height="2.2" fill="#000"/>
<rect x="708" y="406" width="19" height="1" fill="#000"/>
<path d="M708,417 Q708,414.2 711,414.2 H724 Q727,414.2 727,417" fill="none" stroke="#000" stroke-width="2.2"/>
<path d="M717.5,412.5 L717.5,431.5" fill="none" stroke="#000000" stroke-width="1" shape-rendering="crispEdges"/>
<path d="M708,400.5 h6 M711,397.5 v6" stroke="#f00" stroke-width="1"/>
<path d="M717.5,431.5 L717.5,513.5" fill="none" stroke="#ff0000" stroke-width="1" shape-rendering="crispEdges"/>
<circle cx="717.5" cy="513.5" r="2.2" fill="#ff0000"/>
<text x="729" y="401" font-size="14" fill="#000" text-anchor="start" font-weight="normal" font-family='"Liberation Sans", sans-serif' stroke="#000" stroke-width="0.3" textLength="15" lengthAdjust="spacingAndGlyphs">C2</text>
<text x="729" y="415" font-size="14" fill="#000" text-anchor="start" font-weight="normal" font-family='"Liberation Sans", sans-serif' stroke="#000" stroke-width="0.3" textLength="35" lengthAdjust="spacingAndGlyphs">100µF</text>
<path d="M789.5,361.5 L789.5,368.5" fill="none" stroke="#000000" stroke-width="1" shape-rendering="crispEdges"/>
<path d="M789.5,368 L794.5,371 L784.5,376 L794.5,381 L784.5,386 L794.5,391 L789.5,395" fill="none" stroke="#000" stroke-width="1"/>
<path d="M789.5,395.5 L789.5,404.5" fill="none" stroke="#000000" stroke-width="1" shape-rendering="crispEdges"/>
<path d="M789.5,404.5 L789.5,432.5" fill="none" stroke="#ff0000" stroke-width="1" shape-rendering="crispEdges"/>
<path d="M789.5,432.5 L789.5,453.5" fill="none" stroke="#0000ff" stroke-width="1" shape-rendering="crispEdges"/>
<path d="M781,453 L798,453 L789.5,466 z" fill="#0000ff"/>
<rect x="782" y="466" width="16" height="1.2" fill="#0000ff"/>
<path d="M789.5,466.5 L789.5,486.5" fill="none" stroke="#0000ff" stroke-width="1" shape-rendering="crispEdges"/>
<path d="M802,451 L808,456.5 M804.2,459.3 L810.6,453.3 L813.5,461.9 Z M799,463 L805,468.5 M801.3,471 L807.5,465.2 L810.5,474 Z" fill="none" stroke="#0000ff" stroke-width="1"/>
<text x="816" y="465" font-size="13.5" fill="#0000ff" text-anchor="start" font-weight="normal" font-family='"Liberation Sans", sans-serif' stroke="#00f" stroke-width="0.35">LED1</text>
<text x="797" y="373" font-size="14" fill="#000" text-anchor="start" font-weight="normal" font-family='"Liberation Sans", sans-serif' stroke="#000" stroke-width="0.3" textLength="15" lengthAdjust="spacingAndGlyphs">R1</text>
<text x="797" y="389.5" font-size="14" fill="#000" text-anchor="start" font-weight="normal" font-family='"Liberation Sans", sans-serif' stroke="#000" stroke-width="0.3" textLength="30" lengthAdjust="spacingAndGlyphs">330Ω</text>
<circle cx="744.5" cy="315.5" r="2.2" fill="#ff0000"/>
<path d="M744.5,315.5 L744.5,306.5 L829.5,306.5" fill="none" stroke="#ff0000" stroke-width="1" shape-rendering="crispEdges"/>
<path d="M780,261.5 H907 M780.5,154 V262 M906.5,154 V262" fill="none" stroke="#0000ff" stroke-width="1.1" stroke-dasharray="18 6"/>
<path d="M780,154.5 H907" fill="none" stroke="#0000ff" stroke-width="1.1" stroke-dasharray="18 6" stroke-dashoffset="18"/>
<text x="842" y="167" font-size="11.5" fill="#000" text-anchor="middle" font-weight="normal" font-family='"Liberation Serif", serif' stroke="#000" stroke-width="0.4" textLength="31" lengthAdjust="spacingAndGlyphs">XSC1</text>
<rect x="789.5" y="171.5" width="98" height="71" fill="#c0dcc0" stroke="#000"/>
<rect x="792.5" y="174.5" width="62" height="44" fill="#c0c0c0" stroke="#fff"/>
<polyline points="796.5,196.0 797.8,192.7 799.0,189.5 800.3,186.5 801.6,183.7 802.9,181.2 804.1,179.0 805.4,177.3 806.7,176.0 807.9,175.3 809.2,175.0 810.5,175.3 811.7,176.0 813.0,177.3 814.3,179.0 815.5,181.2 816.8,183.7 818.1,186.5 819.4,189.5 820.6,192.7 821.9,196.0 823.2,199.3 824.4,202.5 825.7,205.5 827.0,208.3 828.2,210.8 829.5,213.0 830.8,214.7 832.1,216.0 833.3,216.7 834.6,217.0 835.9,216.7 837.1,216.0 838.4,214.7 839.7,213.0 841.0,210.8 842.2,208.3 843.5,205.5 844.8,202.5 846.0,199.3 847.3,196.0" fill="none" stroke="#000" stroke-width="1.1"/>
<polyline points="796.5,196.0 797.8,194.0 799.0,192.0 800.3,190.1 801.6,188.4 802.9,186.8 804.1,185.5 805.4,184.4 806.7,183.6 807.9,183.2 809.2,183.0 810.5,183.2 811.7,183.6 813.0,184.4 814.3,185.5 815.5,186.8 816.8,188.4 818.1,190.1 819.4,192.0 820.6,194.0 821.9,196.0 823.2,198.0 824.4,200.0 825.7,201.9 827.0,203.6 828.2,205.2 829.5,206.5 830.8,207.6 832.1,208.4 833.3,208.8 834.6,209.0 835.9,208.8 837.1,208.4 838.4,207.6 839.7,206.5 841.0,205.2 842.2,203.6 843.5,201.9 844.8,200.0 846.0,198.0 847.3,196.0" fill="none" stroke="#000" stroke-width="1.1"/>
<text x="862" y="199" font-size="7.5" fill="#000" text-anchor="start" font-weight="normal" font-family='"Liberation Sans", sans-serif' >Ext Trig</text>
<circle cx="798" cy="234.7" r="3.3" fill="#888" stroke="#000" stroke-width="1.6"/>
<circle cx="798" cy="234.7" r="1.2" fill="#000"/>
<text x="798" y="229" font-size="7.5" fill="#000" text-anchor="middle" font-weight="normal" font-family='"Liberation Sans", sans-serif' >A</text>
<circle cx="834" cy="234.7" r="3.3" fill="#888" stroke="#000" stroke-width="1.6"/>
<circle cx="834" cy="234.7" r="1.2" fill="#000"/>
<text x="834" y="229" font-size="7.5" fill="#000" text-anchor="middle" font-weight="normal" font-family='"Liberation Sans", sans-serif' >B</text>
<circle cx="879" cy="207" r="3.3" fill="#888" stroke="#000" stroke-width="1.6"/><circle cx="879" cy="207" r="1.2" fill="#000"/>
<path d="M790,237.5 h4 M792,235.5 v4 M809,237.5 h4 M826,237.5 h4 M828,235.5 v4 M845,237.5 h4 M882,202.5 h4 M884,200.5 v4 M882,217.5 h4" stroke="#222" stroke-width="1"/>
<path d="M879.5,207.5 L897.5,207.5" fill="none" stroke="#000000" stroke-width="1" shape-rendering="crispEdges"/>
<path d="M879.5,207.5 L879.5,216.5 L897.5,216.5" fill="none" stroke="#000000" stroke-width="1" shape-rendering="crispEdges"/>
<path d="M797.5,235.5 L797.5,252.5" fill="none" stroke="#000000" stroke-width="1" shape-rendering="crispEdges"/>
<path d="M798.5,234.5 L807.5,234.5 L807.5,252.5" fill="none" stroke="#000000" stroke-width="1" shape-rendering="crispEdges"/>
<path d="M807.5,252.5 L807.5,279.5 L852.5,279.5" fill="none" stroke="#ff0000" stroke-width="1" shape-rendering="crispEdges"/>
<path d="M834.5,235.5 L834.5,252.5" fill="none" stroke="#000000" stroke-width="1" shape-rendering="crispEdges"/>
<path d="M834.5,252.5 L834.5,300.5" fill="none" stroke="#ff0000" stroke-width="1" shape-rendering="crispEdges"/>
<path d="M834.5,234.5 L843.5,234.5 L843.5,252.5" fill="none" stroke="#000000" stroke-width="1" shape-rendering="crispEdges"/>
<path d="M843.5,252.5 L843.5,270.5 L852.5,270.5 L852.5,288.5" fill="none" stroke="#ff0000" stroke-width="1" shape-rendering="crispEdges"/>
<circle cx="852.5" cy="279.5" r="2.2" fill="#ff0000"/>
<path d="M852.5,288.5 L852.5,300.5" fill="none" stroke="#000000" stroke-width="1" shape-rendering="crispEdges"/>
<text x="577" y="323" font-size="15" fill="#000" text-anchor="start" font-weight="normal" font-family='"Liberation Sans", sans-serif' fill-opacity="0.06">Cattura finestra</text>
</g>
<rect x="57.5" y="539.5" width="195" height="176" fill="#efefef" stroke="#d4d4d4"/>
<rect x="215" y="540" width="31" height="19" fill="#c7c7c7" />
<path d="M226,545 l8,8 M234,545 l-8,8" stroke="#fff" stroke-width="1.5"/>
<text x="139" y="560" font-size="15" fill="#333" text-anchor="middle" font-weight="normal" font-family='"Liberation Sans", sans-serif' >Multimeter-XMM1</text>
<rect x="63.5" y="564.5" width="183" height="144" fill="none" stroke="#dcdcdc"/>
<rect x="64" y="570" width="181" height="31" fill="#ffffff" />
<rect x="64" y="600.5" width="182" height="1.5" fill="#707070" />
<rect x="244.5" y="570" width="1.5" height="32" fill="#707070" />
<rect x="67" y="573" width="175" height="24" fill="#808080" />
<rect x="68" y="574" width="173" height="23" fill="#000" />
<text x="154" y="591" font-size="16" fill="#fff" text-anchor="middle" font-weight="normal" font-family='"Liberation Sans", sans-serif' >67.027 V</text>
<rect x="70.5" y="609.5" width="168" height="28" fill="none" stroke="#dcdcdc"/>
<rect x="83.5" y="614.5" width="27" height="19" fill="#e1e1e1" stroke="#adadad"/>
<text x="97.0" y="628.32" font-size="12" fill="#000" text-anchor="middle" font-weight="normal" font-family='"Liberation Sans", sans-serif' >A</text>
<rect x="120.5" y="614.5" width="27" height="19" fill="#cce4f7" stroke="#3c7fb1"/>
<text x="134.0" y="628.32" font-size="12" fill="#000" text-anchor="middle" font-weight="normal" font-family='"Liberation Sans", sans-serif' >V</text>
<rect x="158.5" y="614.5" width="28" height="19" fill="#e1e1e1" stroke="#adadad"/>
<text x="172.5" y="628.32" font-size="12" fill="#000" text-anchor="middle" font-weight="normal" font-family='"Liberation Sans", sans-serif' >Ω</text>
<rect x="197.5" y="614.5" width="28" height="19" fill="#e1e1e1" stroke="#adadad"/>
<text x="211.5" y="628.32" font-size="12" fill="#000" text-anchor="middle" font-weight="normal" font-family='"Liberation Sans", sans-serif' >dB</text>
<rect x="97.5" y="637.5" width="114" height="25" fill="none" stroke="#dcdcdc"/>
<rect x="107.5" y="643.5" width="42" height="14" fill="#cce4f7" stroke="#3c7fb1"/>
<path d="M119,653 Q123.5,645 128.5,650.5 Q133,656 138,650" fill="none" stroke="#000" stroke-width="1.6"/>
<rect x="162.5" y="643.5" width="39" height="14" fill="#e1e1e1" stroke="#adadad"/>
<rect x="171" y="649" width="22" height="2" fill="#000" />
<rect x="119.5" y="675.5" width="69" height="16" fill="#e1e1e1" stroke="#adadad"/>
<text x="154.0" y="687.82" font-size="12" fill="#000" text-anchor="middle" font-weight="normal" font-family='"Liberation Sans", sans-serif' >Set...</text>
<text x="78.5" y="685" font-size="13" fill="#000" text-anchor="middle" font-weight="normal" font-family='"Liberation Sans", sans-serif' >+</text>
<text x="233" y="686" font-size="13" fill="#000" text-anchor="middle" font-weight="normal" font-family='"Liberation Sans", sans-serif' >−</text>
<circle cx="77.5" cy="694.5" r="6" fill="#f0f0f0" stroke="#c8c8c8"/>
<circle cx="77.5" cy="694.5" r="3.8" fill="#6a6a6a"/>
<circle cx="234" cy="694.5" r="6" fill="#f0f0f0" stroke="#c8c8c8"/>
<circle cx="234" cy="694.5" r="3.8" fill="#6a6a6a"/>
<rect x="244" y="700" width="1.5" height="1.5" fill="#999" />
<rect x="244" y="704" width="1.5" height="1.5" fill="#999" />
<rect x="240" y="704" width="1.5" height="1.5" fill="#999" />
<rect x="236" y="704" width="1.5" height="1.5" fill="#999" />
<rect x="244" y="696" width="1.5" height="1.5" fill="#999" />
<rect x="297.5" y="538.5" width="195" height="173" fill="#efefef" stroke="#d4d4d4"/>
<rect x="455" y="539" width="31" height="19" fill="#c7c7c7" />
<path d="M466,544 l8,8 M474,544 l-8,8" stroke="#fff" stroke-width="1.5"/>
<text x="379" y="559" font-size="15" fill="#333" text-anchor="middle" font-weight="normal" font-family='"Liberation Sans", sans-serif' >Multimeter-XMM2</text>
<rect x="303.5" y="563.5" width="183" height="141" fill="none" stroke="#dcdcdc"/>
<rect x="304" y="569" width="181" height="31" fill="#ffffff" />
<rect x="304" y="599.5" width="182" height="1.5" fill="#707070" />
<rect x="484.5" y="569" width="1.5" height="32" fill="#707070" />
<rect x="307" y="572" width="175" height="24" fill="#808080" />
<rect x="308" y="573" width="173" height="23" fill="#000" />
<text x="394" y="590" font-size="16" fill="#fff" text-anchor="middle" font-weight="normal" font-family='"Liberation Sans", sans-serif' >78.146 V</text>
<rect x="310.5" y="608.5" width="168" height="28" fill="none" stroke="#dcdcdc"/>
<rect x="323.5" y="613.5" width="27" height="19" fill="#e1e1e1" stroke="#adadad"/>
<text x="337.0" y="627.32" font-size="12" fill="#000" text-anchor="middle" font-weight="normal" font-family='"Liberation Sans", sans-serif' >A</text>
<rect x="360.5" y="613.5" width="27" height="19" fill="#cce4f7" stroke="#3c7fb1"/>
<text x="374.0" y="627.32" font-size="12" fill="#000" text-anchor="middle" font-weight="normal" font-family='"Liberation Sans", sans-serif' >V</text>
<rect x="398.5" y="613.5" width="28" height="19" fill="#e1e1e1" stroke="#adadad"/>
<text x="412.5" y="627.32" font-size="12" fill="#000" text-anchor="middle" font-weight="normal" font-family='"Liberation Sans", sans-serif' >Ω</text>
<rect x="437.5" y="613.5" width="28" height="19" fill="#e1e1e1" stroke="#adadad"/>
<text x="451.5" y="627.32" font-size="12" fill="#000" text-anchor="middle" font-weight="normal" font-family='"Liberation Sans", sans-serif' >dB</text>
<rect x="337.5" y="636.5" width="114" height="25" fill="none" stroke="#dcdcdc"/>
<rect x="347.5" y="642.5" width="42" height="14" fill="#e1e1e1" stroke="#adadad"/>
<path d="M359,652 Q363.5,644 368.5,649.5 Q373,655 378,649" fill="none" stroke="#000" stroke-width="1.6"/>
<rect x="402.5" y="642.5" width="39" height="14" fill="#cce4f7" stroke="#3c7fb1"/>
<rect x="411" y="648" width="22" height="2" fill="#000" />
<rect x="359.5" y="674.5" width="69" height="16" fill="#e1e1e1" stroke="#adadad"/>
<text x="394.0" y="686.82" font-size="12" fill="#000" text-anchor="middle" font-weight="normal" font-family='"Liberation Sans", sans-serif' >Set...</text>
<text x="318.5" y="681" font-size="13" fill="#000" text-anchor="middle" font-weight="normal" font-family='"Liberation Sans", sans-serif' >+</text>
<text x="473" y="682" font-size="13" fill="#000" text-anchor="middle" font-weight="normal" font-family='"Liberation Sans", sans-serif' >−</text>
<circle cx="317.5" cy="690.5" r="6" fill="#f0f0f0" stroke="#c8c8c8"/>
<circle cx="317.5" cy="690.5" r="3.8" fill="#6a6a6a"/>
<circle cx="474" cy="690.5" r="6" fill="#f0f0f0" stroke="#c8c8c8"/>
<circle cx="474" cy="690.5" r="3.8" fill="#6a6a6a"/>
<rect x="484" y="696" width="1.5" height="1.5" fill="#999" />
<rect x="484" y="700" width="1.5" height="1.5" fill="#999" />
<rect x="480" y="700" width="1.5" height="1.5" fill="#999" />
<rect x="476" y="700" width="1.5" height="1.5" fill="#999" />
<rect x="484" y="692" width="1.5" height="1.5" fill="#999" />
<rect x="654.5" y="545.5" width="195" height="173" fill="#efefef" stroke="#d4d4d4"/>
<rect x="812" y="546" width="31" height="19" fill="#c7c7c7" />
<path d="M823,551 l8,8 M831,551 l-8,8" stroke="#fff" stroke-width="1.5"/>
<text x="736" y="566" font-size="15" fill="#333" text-anchor="middle" font-weight="normal" font-family='"Liberation Sans", sans-serif' >Multimeter-XMM3</text>
<rect x="660.5" y="570.5" width="183" height="141" fill="none" stroke="#dcdcdc"/>
<rect x="661" y="576" width="181" height="31" fill="#ffffff" />
<rect x="661" y="606.5" width="182" height="1.5" fill="#707070" />
<rect x="841.5" y="576" width="1.5" height="32" fill="#707070" />
<rect x="664" y="579" width="175" height="24" fill="#808080" />
<rect x="665" y="580" width="173" height="23" fill="#000" />
<text x="751" y="597" font-size="16" fill="#fff" text-anchor="middle" font-weight="normal" font-family='"Liberation Sans", sans-serif' >3.203 V</text>
<rect x="667.5" y="615.5" width="168" height="28" fill="none" stroke="#dcdcdc"/>
<rect x="680.5" y="620.5" width="27" height="19" fill="#e1e1e1" stroke="#adadad"/>
<text x="694.0" y="634.32" font-size="12" fill="#000" text-anchor="middle" font-weight="normal" font-family='"Liberation Sans", sans-serif' >A</text>
<rect x="717.5" y="620.5" width="27" height="19" fill="#cce4f7" stroke="#3c7fb1"/>
<text x="731.0" y="634.32" font-size="12" fill="#000" text-anchor="middle" font-weight="normal" font-family='"Liberation Sans", sans-serif' >V</text>
<rect x="755.5" y="620.5" width="28" height="19" fill="#e1e1e1" stroke="#adadad"/>
<text x="769.5" y="634.32" font-size="12" fill="#000" text-anchor="middle" font-weight="normal" font-family='"Liberation Sans", sans-serif' >Ω</text>
<rect x="794.5" y="620.5" width="28" height="19" fill="#e1e1e1" stroke="#adadad"/>
<text x="808.5" y="634.32" font-size="12" fill="#000" text-anchor="middle" font-weight="normal" font-family='"Liberation Sans", sans-serif' >dB</text>
<rect x="694.5" y="643.5" width="114" height="25" fill="none" stroke="#dcdcdc"/>
<rect x="704.5" y="649.5" width="42" height="14" fill="#e1e1e1" stroke="#adadad"/>
<path d="M716,659 Q720.5,651 725.5,656.5 Q730,662 735,656" fill="none" stroke="#000" stroke-width="1.6"/>
<rect x="759.5" y="649.5" width="39" height="14" fill="#cce4f7" stroke="#3c7fb1"/>
<rect x="768" y="655" width="22" height="2" fill="#000" />
<rect x="716.5" y="681.5" width="69" height="16" fill="#e1e1e1" stroke="#adadad"/>
<text x="751.0" y="693.82" font-size="12" fill="#000" text-anchor="middle" font-weight="normal" font-family='"Liberation Sans", sans-serif' >Set...</text>
<text x="675.5" y="688" font-size="13" fill="#000" text-anchor="middle" font-weight="normal" font-family='"Liberation Sans", sans-serif' >+</text>
<text x="830" y="689" font-size="13" fill="#000" text-anchor="middle" font-weight="normal" font-family='"Liberation Sans", sans-serif' >−</text>
<circle cx="674.5" cy="697.5" r="6" fill="#f0f0f0" stroke="#c8c8c8"/>
<circle cx="674.5" cy="697.5" r="3.8" fill="#6a6a6a"/>
<circle cx="831" cy="697.5" r="6" fill="#f0f0f0" stroke="#c8c8c8"/>
<circle cx="831" cy="697.5" r="3.8" fill="#6a6a6a"/>
<rect x="841" y="703" width="1.5" height="1.5" fill="#999" />
<rect x="841" y="707" width="1.5" height="1.5" fill="#999" />
<rect x="837" y="707" width="1.5" height="1.5" fill="#999" />
<rect x="833" y="707" width="1.5" height="1.5" fill="#999" />
<rect x="841" y="699" width="1.5" height="1.5" fill="#999" />
<rect x="829" y="297" width="537" height="439" fill="#559ac6" />
<rect x="829" y="297" width="1" height="439" fill="#4683ab"/>
<rect x="829" y="297" width="537" height="1" fill="#4a88b0"/>
<rect x="826" y="300" width="3" height="436" fill="#000" fill-opacity="0.03"/>
<text x="1111" y="318" font-size="14" fill="#222" text-anchor="middle" font-weight="normal" font-family='"Liberation Sans", sans-serif' >Oscilloscope-XSC1</text>
<rect x="1357" y="297" width="9" height="21" fill="#c75050" />
<rect x="837" y="329" width="529" height="407" fill="#f0f0f0" />
<rect x="837" y="329" width="529" height="250" fill="#9a9a9a" />
<rect x="837" y="329" width="1" height="250" fill="#707070"/>
<rect x="837" y="329" width="529" height="1" fill="#707070"/>
<rect x="840" y="331" width="526" height="245" fill="#000" />
<rect x="839" y="576" width="527" height="2" fill="#ffffff" />
<line x1="901.5" y1="339.5" x2="901.5" y2="568.1" stroke="#c8c8c8" stroke-width="1" stroke-dasharray="3 3"/><line x1="954.5" y1="339.5" x2="954.5" y2="568.1" stroke="#c8c8c8" stroke-width="1" stroke-dasharray="3 3"/><line x1="1006.5" y1="339.5" x2="1006.5" y2="568.1" stroke="#c8c8c8" stroke-width="1" stroke-dasharray="3 3"/><line x1="1059.5" y1="339.5" x2="1059.5" y2="568.1" stroke="#c8c8c8" stroke-width="1" stroke-dasharray="3 3"/><line x1="1112.5" y1="339.5" x2="1112.5" y2="568.1" stroke="#c8c8c8" stroke-width="1" stroke-dasharray="3 3"/><line x1="1165.5" y1="339.5" x2="1165.5" y2="568.1" stroke="#c8c8c8" stroke-width="1" stroke-dasharray="3 3"/><line x1="1217.5" y1="339.5" x2="1217.5" y2="568.1" stroke="#c8c8c8" stroke-width="1" stroke-dasharray="3 3"/><line x1="1270.5" y1="339.5" x2="1270.5" y2="568.1" stroke="#c8c8c8" stroke-width="1" stroke-dasharray="3 3"/><line x1="1323.5" y1="339.5" x2="1323.5" y2="568.1" stroke="#c8c8c8" stroke-width="1" stroke-dasharray="3 3"/><line x1="848.5" y1="377.5" x2="1366" y2="377.5" stroke="#c8c8c8" stroke-width="1" stroke-dasharray="3 3"/><line x1="848.5" y1="415.5" x2="1366" y2="415.5" stroke="#c8c8c8" stroke-width="1" stroke-dasharray="3 3"/><line x1="848.5" y1="492.5" x2="1366" y2="492.5" stroke="#c8c8c8" stroke-width="1" stroke-dasharray="3 3"/><line x1="848.5" y1="530.5" x2="1366" y2="530.5" stroke="#c8c8c8" stroke-width="1" stroke-dasharray="3 3"/>
<rect x="849" y="339" width="517" height="1" fill="#ffffff"/>
<rect x="849" y="568" width="517" height="1" fill="#ffffff"/>
<rect x="848" y="339" width="1" height="230" fill="#00ff00"/>
<rect x="849" y="454" width="517" height="1" fill="#ffffff"/>
<rect x="850" y="453" width="1" height="1" fill="#dddddd"/><rect x="853" y="453" width="1" height="1" fill="#dddddd"/><rect x="859" y="455" width="1" height="1" fill="#dddddd"/><rect x="865" y="455" width="1" height="1" fill="#dddddd"/><rect x="871" y="453" width="1" height="1" fill="#dddddd"/><rect x="874" y="453" width="1" height="1" fill="#dddddd"/><rect x="877" y="453" width="1" height="1" fill="#dddddd"/><rect x="883" y="453" width="1" height="1" fill="#dddddd"/><rect x="889" y="453" width="1" height="1" fill="#dddddd"/><rect x="892" y="455" width="1" height="1" fill="#dddddd"/><rect x="895" y="453" width="1" height="1" fill="#dddddd"/><rect x="898" y="453" width="1" height="1" fill="#dddddd"/><rect x="910" y="453" width="1" height="1" fill="#dddddd"/><rect x="913" y="453" width="1" height="1" fill="#dddddd"/><rect x="919" y="455" width="1" height="1" fill="#dddddd"/><rect x="922" y="453" width="1" height="1" fill="#dddddd"/><rect x="925" y="453" width="1" height="1" fill="#dddddd"/><rect x="928" y="453" width="1" height="1" fill="#dddddd"/><rect x="931" y="455" width="1" height="1" fill="#dddddd"/><rect x="934" y="453" width="1" height="1" fill="#dddddd"/><rect x="955" y="453" width="1" height="1" fill="#dddddd"/><rect x="964" y="453" width="1" height="1" fill="#dddddd"/><rect x="967" y="453" width="1" height="1" fill="#dddddd"/><rect x="970" y="455" width="1" height="1" fill="#dddddd"/><rect x="973" y="453" width="1" height="1" fill="#dddddd"/><rect x="979" y="453" width="1" height="1" fill="#dddddd"/><rect x="982" y="455" width="1" height="1" fill="#dddddd"/><rect x="985" y="453" width="1" height="1" fill="#dddddd"/><rect x="991" y="453" width="1" height="1" fill="#dddddd"/><rect x="994" y="453" width="1" height="1" fill="#dddddd"/><rect x="997" y="453" width="1" height="1" fill="#dddddd"/><rect x="1003" y="453" width="1" height="1" fill="#dddddd"/><rect x="1006" y="455" width="1" height="1" fill="#dddddd"/><rect x="1009" y="455" width="1" height="1" fill="#dddddd"/><rect x="1012" y="455" width="1" height="1" fill="#dddddd"/><rect x="1018" y="455" width="1" height="1" fill="#dddddd"/><rect x="1024" y="453" width="1" height="1" fill="#dddddd"/><rect x="1030" y="455" width="1" height="1" fill="#dddddd"/><rect x="1033" y="453" width="1" height="1" fill="#dddddd"/><rect x="1036" y="453" width="1" height="1" fill="#dddddd"/><rect x="1045" y="455" width="1" height="1" fill="#dddddd"/><rect x="1051" y="455" width="1" height="1" fill="#dddddd"/><rect x="1057" y="453" width="1" height="1" fill="#dddddd"/><rect x="1060" y="455" width="1" height="1" fill="#dddddd"/><rect x="1063" y="455" width="1" height="1" fill="#dddddd"/><rect x="1072" y="453" width="1" height="1" fill="#dddddd"/><rect x="1075" y="453" width="1" height="1" fill="#dddddd"/><rect x="1078" y="453" width="1" height="1" fill="#dddddd"/><rect x="1084" y="455" width="1" height="1" fill="#dddddd"/><rect x="1093" y="455" width="1" height="1" fill="#dddddd"/><rect x="1096" y="455" width="1" height="1" fill="#dddddd"/><rect x="1099" y="455" width="1" height="1" fill="#dddddd"/><rect x="1102" y="453" width="1" height="1" fill="#dddddd"/><rect x="1105" y="455" width="1" height="1" fill="#dddddd"/><rect x="1111" y="453" width="1" height="1" fill="#dddddd"/><rect x="1117" y="455" width="1" height="1" fill="#dddddd"/><rect x="1123" y="455" width="1" height="1" fill="#dddddd"/><rect x="1126" y="453" width="1" height="1" fill="#dddddd"/><rect x="1129" y="455" width="1" height="1" fill="#dddddd"/><rect x="1132" y="453" width="1" height="1" fill="#dddddd"/><rect x="1135" y="453" width="1" height="1" fill="#dddddd"/><rect x="1138" y="455" width="1" height="1" fill="#dddddd"/><rect x="1147" y="455" width="1" height="1" fill="#dddddd"/><rect x="1150" y="453" width="1" height="1" fill="#dddddd"/><rect x="1153" y="453" width="1" height="1" fill="#dddddd"/><rect x="1159" y="455" width="1" height="1" fill="#dddddd"/><rect x="1171" y="455" width="1" height="1" fill="#dddddd"/><rect x="1174" y="453" width="1" height="1" fill="#dddddd"/><rect x="1177" y="455" width="1" height="1" fill="#dddddd"/><rect x="1180" y="455" width="1" height="1" fill="#dddddd"/><rect x="1183" y="453" width="1" height="1" fill="#dddddd"/><rect x="1186" y="455" width="1" height="1" fill="#dddddd"/><rect x="1198" y="453" width="1" height="1" fill="#dddddd"/><rect x="1204" y="453" width="1" height="1" fill="#dddddd"/><rect x="1213" y="455" width="1" height="1" fill="#dddddd"/><rect x="1216" y="455" width="1" height="1" fill="#dddddd"/><rect x="1219" y="453" width="1" height="1" fill="#dddddd"/><rect x="1222" y="453" width="1" height="1" fill="#dddddd"/><rect x="1225" y="453" width="1" height="1" fill="#dddddd"/><rect x="1240" y="455" width="1" height="1" fill="#dddddd"/><rect x="1246" y="455" width="1" height="1" fill="#dddddd"/><rect x="1252" y="455" width="1" height="1" fill="#dddddd"/><rect x="1261" y="455" width="1" height="1" fill="#dddddd"/><rect x="1267" y="453" width="1" height="1" fill="#dddddd"/><rect x="1270" y="455" width="1" height="1" fill="#dddddd"/><rect x="1273" y="453" width="1" height="1" fill="#dddddd"/><rect x="1276" y="453" width="1" height="1" fill="#dddddd"/><rect x="1288" y="453" width="1" height="1" fill="#dddddd"/><rect x="1294" y="455" width="1" height="1" fill="#dddddd"/><rect x="1297" y="453" width="1" height="1" fill="#dddddd"/><rect x="1300" y="455" width="1" height="1" fill="#dddddd"/><rect x="1306" y="455" width="1" height="1" fill="#dddddd"/><rect x="1309" y="455" width="1" height="1" fill="#dddddd"/><rect x="1312" y="453" width="1" height="1" fill="#dddddd"/><rect x="1318" y="453" width="1" height="1" fill="#dddddd"/><rect x="1321" y="455" width="1" height="1" fill="#dddddd"/><rect x="1324" y="453" width="1" height="1" fill="#dddddd"/><rect x="1327" y="455" width="1" height="1" fill="#dddddd"/><rect x="1330" y="455" width="1" height="1" fill="#dddddd"/><rect x="1333" y="453" width="1" height="1" fill="#dddddd"/><rect x="1339" y="455" width="1" height="1" fill="#dddddd"/><rect x="1342" y="455" width="1" height="1" fill="#dddddd"/><rect x="1351" y="453" width="1" height="1" fill="#dddddd"/><rect x="1357" y="455" width="1" height="1" fill="#dddddd"/><rect x="1360" y="453" width="1" height="1" fill="#dddddd"/><rect x="1363" y="453" width="1" height="1" fill="#dddddd"/>
<path d="M840.5,331 h16 l-8,8 z" fill="#ff00ff"/><rect x="841" y="331" width="15" height="1.5" fill="#00ffff"/><rect x="847" y="333" width="3" height="2" fill="#ffff00"/>
<circle cx="848.5" cy="392" r="2.5" fill="none" stroke="#ff00ff"/>
<polyline points="848.0,392.8 849.0,392.1 850.0,391.5 851.0,391.0 852.0,390.5 853.0,390.2 854.0,389.9 855.0,389.7 856.0,389.5 857.0,389.5 858.0,389.5 859.0,389.7 860.0,389.9 861.0,390.2 862.0,390.5 863.0,391.0 864.0,391.5 865.0,392.1 866.0,392.8 867.0,393.6 868.0,394.4 869.0,395.3 870.0,396.3 871.0,397.4 872.0,398.5 873.0,399.7 874.0,401.0 875.0,402.4 876.0,403.8 877.0,405.3 878.0,406.8 879.0,408.4 880.0,410.0 881.0,411.8 882.0,413.5 883.0,415.3 884.0,417.2 885.0,419.1 886.0,421.1 887.0,423.1 888.0,425.1 889.0,427.2 890.0,429.3 891.0,431.5 892.0,433.6 893.0,435.8 894.0,438.0 895.0,440.3 896.0,442.5 897.0,444.8 898.0,447.1 899.0,449.4 900.0,451.7 901.0,454.0 902.0,456.3 903.0,458.6 904.0,460.9 905.0,463.2 906.0,465.5 907.0,467.7 908.0,470.0 909.0,472.2 910.0,474.4 911.0,476.5 912.0,478.7 913.0,480.8 914.0,482.9 915.0,484.9 916.0,486.9 917.0,488.9 918.0,490.8 919.0,492.7 920.0,494.5 921.0,496.2 922.0,498.0 923.0,499.6 924.0,501.2 925.0,502.7 926.0,504.2 927.0,505.6 928.0,507.0 929.0,508.3 930.0,509.5 931.0,510.6 932.0,511.7 933.0,512.7 934.0,513.6 935.0,514.4 936.0,515.2 937.0,515.9 938.0,516.5 939.0,517.0 940.0,517.5 941.0,517.8 942.0,518.1 943.0,518.3 944.0,518.5 945.0,518.5 946.0,518.5 947.0,518.3 948.0,518.1 949.0,517.8 950.0,517.5 951.0,517.0 952.0,516.5 953.0,515.9 954.0,515.2 955.0,514.4 956.0,513.6 957.0,512.7 958.0,511.7 959.0,510.6 960.0,509.5 961.0,508.3 962.0,507.0 963.0,505.6 964.0,504.2 965.0,502.7 966.0,501.2 967.0,499.6 968.0,498.0 969.0,496.2 970.0,494.5 971.0,492.7 972.0,490.8 973.0,488.9 974.0,486.9 975.0,484.9 976.0,482.9 977.0,480.8 978.0,478.7 979.0,476.5 980.0,474.4 981.0,472.2 982.0,470.0 983.0,467.7 984.0,465.5 985.0,463.2 986.0,460.9 987.0,458.6 988.0,456.3 989.0,454.0 990.0,451.7 991.0,449.4 992.0,447.1 993.0,444.8 994.0,442.5 995.0,440.3 996.0,438.0 997.0,435.8 998.0,433.6 999.0,431.5 1000.0,429.3 1001.0,427.2 1002.0,425.1 1003.0,423.1 1004.0,421.1 1005.0,419.1 1006.0,417.2 1007.0,415.3 1008.0,413.5 1009.0,411.8 1010.0,410.0 1011.0,408.4 1012.0,406.8 1013.0,405.3 1014.0,403.8 1015.0,402.4 1016.0,401.0 1017.0,399.7 1018.0,398.5 1019.0,397.4 1020.0,396.3 1021.0,395.3 1022.0,394.4 1023.0,393.6 1024.0,392.8 1025.0,392.1 1026.0,391.5 1027.0,391.0 1028.0,390.5 1029.0,390.2 1030.0,389.9 1031.0,389.7 1032.0,389.5 1033.0,389.5 1034.0,389.5 1035.0,389.7 1036.0,389.9 1037.0,390.2 1038.0,390.5 1039.0,391.0 1040.0,391.5 1041.0,392.1 1042.0,392.8 1043.0,393.6 1044.0,394.4 1045.0,395.3 1046.0,396.3 1047.0,397.4 1048.0,398.5 1049.0,399.7 1050.0,401.0 1051.0,402.4 1052.0,403.8 1053.0,405.3 1054.0,406.8 1055.0,408.4 1056.0,410.0 1057.0,411.8 1058.0,413.5 1059.0,415.3 1060.0,417.2 1061.0,419.1 1062.0,421.1 1063.0,423.1 1064.0,425.1 1065.0,427.2 1066.0,429.3 1067.0,431.5 1068.0,433.6 1069.0,435.8 1070.0,438.0 1071.0,440.3 1072.0,442.5 1073.0,444.8 1074.0,447.1 1075.0,449.4 1076.0,451.7 1077.0,454.0 1078.0,456.3 1079.0,458.6 1080.0,460.9 1081.0,463.2 1082.0,465.5 1083.0,467.7 1084.0,470.0 1085.0,472.2 1086.0,474.4 1087.0,476.5 1088.0,478.7 1089.0,480.8 1090.0,482.9 1091.0,484.9 1092.0,486.9 1093.0,488.9 1094.0,490.8 1095.0,492.7 1096.0,494.5 1097.0,496.2 1098.0,498.0 1099.0,499.6 1100.0,501.2 1101.0,502.7 1102.0,504.2 1103.0,505.6 1104.0,507.0 1105.0,508.3 1106.0,509.5 1107.0,510.6 1108.0,511.7 1109.0,512.7 1110.0,513.6 1111.0,514.4 1112.0,515.2 1113.0,515.9 1114.0,516.5 1115.0,517.0 1116.0,517.5 1117.0,517.8 1118.0,518.1 1119.0,518.3 1120.0,518.5 1121.0,518.5 1122.0,518.5 1123.0,518.3 1124.0,518.1 1125.0,517.8 1126.0,517.5 1127.0,517.0 1128.0,516.5 1129.0,515.9 1130.0,515.2 1131.0,514.4 1132.0,513.6 1133.0,512.7 1134.0,511.7 1135.0,510.6 1136.0,509.5 1137.0,508.3 1138.0,507.0 1139.0,505.6 1140.0,504.2 1141.0,502.7 1142.0,501.2" fill="none" stroke="#ff0000" stroke-width="1.15"/>
<polyline points="849,415.5 931.5,415.5 931.5,430 931.5,466.5 932.9,444.0 934.3,462.0 935.7,447.6 937.1,459.1 938.5,449.9 939.9,457.3 941.3,451.4 942.7,456.1 944.1,452.3 945.5,455.4 990,454.5 1002,415.5 1107.5,415.5 1107.5,430 1107.5,466.5 1108.9,444.0 1110.3,462.0 1111.7,447.6 1113.1,459.1 1114.5,449.9 1115.9,457.3 1117.3,451.4 1118.7,456.1 1120.1,452.3 1121.5,455.4 1142,454.5" fill="none" stroke="#ff0000" stroke-width="1"/>
<rect x="837" y="579" width="529" height="17" fill="#f0f0f0" />
<rect x="837" y="596" width="59" height="1" fill="#a0a0a0"/>
<path d="M847.5,582 l-4,3.8 l4,3.8" fill="none" stroke="#444" stroke-width="2"/>
<rect x="853" y="580" width="1" height="11" fill="#cfcfcf"/>
<rect x="1269" y="581" width="97" height="10" fill="#cdcdcd" />
<rect x="838.5" y="597.5" width="57" height="57" fill="#f0f0f0" stroke="#a0a0a0"/>
<rect x="839" y="654" width="57" height="1" fill="#ffffff"/>
<text x="843" y="616" font-size="11.5" fill="#000" text-anchor="start" font-weight="normal" font-family='"Liberation Sans", sans-serif' >T1</text>
<text x="843" y="630" font-size="11.5" fill="#000" text-anchor="start" font-weight="normal" font-family='"Liberation Sans", sans-serif' >T2</text>
<text x="843" y="650" font-size="11.5" fill="#000" text-anchor="start" font-weight="normal" font-family='"Liberation Sans", sans-serif' >T2-T1</text>
<rect x="863.5" y="603.5" width="12" height="14" fill="#e6e6e6" stroke="#a8a8a8"/>
<rect x="863.5" y="621.5" width="12" height="14" fill="#e6e6e6" stroke="#a8a8a8"/>
<rect x="880.5" y="603.5" width="12" height="14" fill="#e6e6e6" stroke="#a8a8a8"/>
<rect x="880.5" y="621.5" width="12" height="14" fill="#e6e6e6" stroke="#a8a8a8"/>
<path d="M866,610.5 l4,-4 v2.5 h3.5 v3 h-3.5 v2.5 z" fill="#000"/>
<path d="M889,610.5 l-4,-4 v2.5 h-3.5 v3 h3.5 v2.5 z" fill="#000"/>
<path d="M866,628.5 l4,-4 v2.5 h3.5 v3 h-3.5 v2.5 z" fill="#000"/>
<path d="M889,628.5 l-4,-4 v2.5 h-3.5 v3 h3.5 v2.5 z" fill="#000"/>
<rect x="897" y="597" width="323" height="58" fill="#fff"/>
<rect x="897" y="597" width="323" height="1" fill="#6d6d6d"/>
<rect x="897" y="597" width="1" height="58" fill="#6d6d6d"/>
<rect x="897" y="598" width="323" height="1" fill="#a0a0a0"/>
<rect x="898" y="598" width="1" height="57" fill="#a0a0a0"/>
<rect x="897" y="655" width="323" height="1" fill="#f0f0f0"/>
<text x="933" y="609" font-size="11" fill="#000" text-anchor="middle" font-weight="normal" font-family='"Liberation Sans", sans-serif' >Time</text>
<text x="933" y="622" font-size="11" fill="#000" text-anchor="middle" font-weight="normal" font-family='"Liberation Sans", sans-serif' >270.048 ms</text>
<text x="933" y="635" font-size="11" fill="#000" text-anchor="middle" font-weight="normal" font-family='"Liberation Sans", sans-serif' >270.048 ms</text>
<text x="933" y="648" font-size="11" fill="#000" text-anchor="middle" font-weight="normal" font-family='"Liberation Sans", sans-serif' >0.000 s</text>
<text x="1013" y="609" font-size="11" fill="#000" text-anchor="middle" font-weight="normal" font-family='"Liberation Sans", sans-serif' >Channel_A</text>
<text x="1013" y="622" font-size="11" fill="#000" text-anchor="middle" font-weight="normal" font-family='"Liberation Sans", sans-serif' >162.318 V</text>
<text x="1013" y="635" font-size="11" fill="#000" text-anchor="middle" font-weight="normal" font-family='"Liberation Sans", sans-serif' >162.318 V</text>
<text x="1013" y="648" font-size="11" fill="#000" text-anchor="middle" font-weight="normal" font-family='"Liberation Sans", sans-serif' >0.000 V</text>
<text x="1092" y="609" font-size="11" fill="#000" text-anchor="middle" font-weight="normal" font-family='"Liberation Sans", sans-serif' >Channel_B</text>
<text x="1092" y="622" font-size="11" fill="#000" text-anchor="middle" font-weight="normal" font-family='"Liberation Sans", sans-serif' >5.018 V</text>
<text x="1092" y="635" font-size="11" fill="#000" text-anchor="middle" font-weight="normal" font-family='"Liberation Sans", sans-serif' >5.018 V</text>
<text x="1092" y="648" font-size="11" fill="#000" text-anchor="middle" font-weight="normal" font-family='"Liberation Sans", sans-serif' >0.000 V</text>
<rect x="1228.5" y="603.5" width="60" height="20" fill="#e1e1e1" stroke="#adadad"/>
<text x="1258.5" y="617.64" font-size="11.5" fill="#000" text-anchor="middle" font-weight="normal" font-family='"Liberation Sans", sans-serif' >Reverse</text>
<rect x="1228.5" y="631.5" width="60" height="20" fill="#e1e1e1" stroke="#adadad"/>
<text x="1258.5" y="645.64" font-size="11.5" fill="#000" text-anchor="middle" font-weight="normal" font-family='"Liberation Sans", sans-serif' >Save</text>
<text x="1297" y="655" font-size="11.5" fill="#000" text-anchor="start" font-weight="normal" font-family='"Liberation Sans", sans-serif' >Ext. trigger</text>
<circle cx="1365" cy="652" r="5.5" fill="#f6f6f6" stroke="#bbb"/>
<path d="M838.5,668.5 h6 M897.2,668.5 H967.5" fill="none" stroke="#dcdcdc"/>
<path d="M838.5,668.5 V738" fill="none" stroke="#dcdcdc"/>
<text x="846" y="672" font-size="11.5" fill="#000" text-anchor="start" font-weight="normal" font-family='"Liberation Sans", sans-serif' >Timebase</text>
<path d="M970.5,668.5 h6 M1035.6,668.5 H1097.5" fill="none" stroke="#dcdcdc"/>
<path d="M970.5,668.5 V738" fill="none" stroke="#dcdcdc"/>
<text x="978" y="672" font-size="11.5" fill="#000" text-anchor="start" font-weight="normal" font-family='"Liberation Sans", sans-serif' >Channel A</text>
<path d="M1099.5,668.5 h6 M1164.6,668.5 H1226.5" fill="none" stroke="#dcdcdc"/>
<path d="M1099.5,668.5 V738" fill="none" stroke="#dcdcdc"/>
<text x="1107" y="672" font-size="11.5" fill="#000" text-anchor="start" font-weight="normal" font-family='"Liberation Sans", sans-serif' >Channel B</text>
<path d="M1228.5,668.5 h6 M1280.8,668.5 H1367.5" fill="none" stroke="#dcdcdc"/>
<path d="M1228.5,668.5 V738" fill="none" stroke="#dcdcdc"/>
<text x="1236" y="672" font-size="11.5" fill="#000" text-anchor="start" font-weight="normal" font-family='"Liberation Sans", sans-serif' >Trigger</text>
<text x="840" y="691" font-size="11.5" fill="#000" text-anchor="start" font-weight="normal" font-family='"Liberation Sans", sans-serif' >Scale:</text>
<rect x="876.5" y="676.5" width="86" height="17" fill="#fff" stroke="#aaaaaa"/>
<text x="881" y="689.14" font-size="11.5" fill="#000" text-anchor="start" font-weight="normal" font-family='"Liberation Sans", sans-serif' >5 ms/Div</text>
<text x="840" y="711" font-size="11.5" fill="#000" text-anchor="start" font-weight="normal" font-family='"Liberation Sans", sans-serif' >X pos.(Div):</text>
<rect x="901.5" y="697.5" width="61" height="17" fill="#fff" stroke="#aaaaaa"/>
<text x="906" y="710.14" font-size="11.5" fill="#000" text-anchor="start" font-weight="normal" font-family='"Liberation Sans", sans-serif' >0</text>
<text x="972" y="691" font-size="11.5" fill="#000" text-anchor="start" font-weight="normal" font-family='"Liberation Sans", sans-serif' >Scale:</text>
<rect x="1008.5" y="676.5" width="86" height="17" fill="#fff" stroke="#aaaaaa"/>
<text x="1013" y="689.14" font-size="11.5" fill="#000" text-anchor="start" font-weight="normal" font-family='"Liberation Sans", sans-serif' >100&#160; V/Div</text>
<text x="972" y="711" font-size="11.5" fill="#000" text-anchor="start" font-weight="normal" font-family='"Liberation Sans", sans-serif' >Y pos.(Div):</text>
<rect x="1033.5" y="697.5" width="61" height="17" fill="#fff" stroke="#aaaaaa"/>
<text x="1038" y="710.14" font-size="11.5" fill="#000" text-anchor="start" font-weight="normal" font-family='"Liberation Sans", sans-serif' >0</text>
<text x="1101" y="691" font-size="11.5" fill="#000" text-anchor="start" font-weight="normal" font-family='"Liberation Sans", sans-serif' >Scale:</text>
<rect x="1138.5" y="675.5" width="68" height="19" fill="#fff" stroke="#3c7fb1"/>
<text x="1143" y="689" font-size="11.5" fill="#000" text-anchor="start" font-weight="normal" font-family='"Liberation Sans", sans-serif' >5&#160; V/Div</text>
<rect x="1143" y="679" width="1" height="13" fill="#000"/>
<rect x="1208.5" y="677.5" width="15" height="16" fill="#f0f0f0" stroke="#cfcfcf"/>
<path d="M1213,684 l3,-3 l3,3 z M1213,688 l3,3 l3,-3 z" fill="#000"/>
<text x="1101" y="711" font-size="11.5" fill="#000" text-anchor="start" font-weight="normal" font-family='"Liberation Sans", sans-serif' >Y pos.(Div):</text>
<rect x="1164.5" y="697.5" width="60" height="18" fill="#fff" stroke="#aaaaaa"/>
<text x="1169" y="710.64" font-size="11.5" fill="#000" text-anchor="start" font-weight="normal" font-family='"Liberation Sans", sans-serif' >0</text>
<text x="1233" y="691" font-size="11.5" fill="#000" text-anchor="start" font-weight="normal" font-family='"Liberation Sans", sans-serif' >Edge:</text>
<rect x="1277.5" y="680.5" width="15" height="16" fill="#cce4f7" stroke="#3c7fb1"/>
<path d="M1281,693 h4 v-9 h4" fill="none" stroke="#000" stroke-width="1"/>
<rect x="1296.5" y="680.5" width="15" height="16" fill="#e1e1e1" stroke="#adadad"/>
<path d="M1300,684 h4 v9 h4" fill="none" stroke="#000" stroke-width="1"/>
<rect x="1316.5" y="680.5" width="17" height="16" fill="#cce4f7" stroke="#3c7fb1"/>
<text x="1325.0" y="692.64" font-size="11.5" fill="#000" text-anchor="middle" font-weight="normal" font-family='"Liberation Sans", sans-serif' >A</text>
<rect x="1335.5" y="680.5" width="16" height="16" fill="#e1e1e1" stroke="#adadad"/>
<text x="1343.5" y="692.64" font-size="11.5" fill="#999" text-anchor="middle" font-weight="normal" font-family='"Liberation Sans", sans-serif' >B</text>
<rect x="1355.5" y="680.5" width="16" height="16" fill="#e1e1e1" stroke="#adadad"/>
<text x="1363.5" y="692.64" font-size="11.5" fill="#999" text-anchor="middle" font-weight="normal" font-family='"Liberation Sans", sans-serif' >Ext</text>
<text x="1233" y="711" font-size="11.5" fill="#000" text-anchor="start" font-weight="normal" font-family='"Liberation Sans", sans-serif' >Level:</text>
<rect x="1277.5" y="701.5" width="70" height="17" fill="#fff" stroke="#aaaaaa"/>
<text x="1282" y="714.14" font-size="11.5" fill="#000" text-anchor="start" font-weight="normal" font-family='"Liberation Sans", sans-serif' >0</text>
<rect x="1349.5" y="701.5" width="19" height="17" fill="#fff" stroke="#aaaaaa"/>
<text x="1354" y="714.14" font-size="11.5" fill="#000" text-anchor="start" font-weight="normal" font-family='"Liberation Sans", sans-serif' >V</text>
<rect x="845.5" y="720.5" width="23" height="17" fill="#cce4f7" stroke="#3c7fb1"/>
<text x="857.0" y="733" font-size="11.5" fill="#000" text-anchor="middle" font-weight="normal" font-family='"Liberation Sans", sans-serif' >Y/T</text>
<rect x="871.5" y="720.5" width="25" height="17" fill="#e1e1e1" stroke="#adadad"/>
<text x="884.0" y="733" font-size="11.5" fill="#000" text-anchor="middle" font-weight="normal" font-family='"Liberation Sans", sans-serif' >Add</text>
<rect x="901.5" y="720.5" width="25" height="17" fill="#e1e1e1" stroke="#adadad"/>
<text x="914.0" y="733" font-size="11.5" fill="#000" text-anchor="middle" font-weight="normal" font-family='"Liberation Sans", sans-serif' >B/A</text>
<rect x="929.5" y="720.5" width="27" height="17" fill="#e1e1e1" stroke="#adadad"/>
<text x="943.0" y="733" font-size="11.5" fill="#000" text-anchor="middle" font-weight="normal" font-family='"Liberation Sans", sans-serif' >A/B</text>
<rect x="973.5" y="720.5" width="22" height="17" fill="#e1e1e1" stroke="#adadad"/>
<text x="984.5" y="733" font-size="11.5" fill="#000" text-anchor="middle" font-weight="normal" font-family='"Liberation Sans", sans-serif' >AC</text>
<rect x="998.5" y="720.5" width="24" height="17" fill="#e1e1e1" stroke="#adadad"/>
<text x="1010.5" y="733" font-size="11.5" fill="#000" text-anchor="middle" font-weight="normal" font-family='"Liberation Sans", sans-serif' >0</text>
<rect x="1025.5" y="720.5" width="25" height="17" fill="#cce4f7" stroke="#3c7fb1"/>
<text x="1038.0" y="733" font-size="11.5" fill="#000" text-anchor="middle" font-weight="normal" font-family='"Liberation Sans", sans-serif' >DC</text>
<rect x="1104.5" y="722.5" width="20" height="17" fill="#e1e1e1" stroke="#adadad"/>
<text x="1114.5" y="735" font-size="11.5" fill="#000" text-anchor="middle" font-weight="normal" font-family='"Liberation Sans", sans-serif' >AC</text>
<rect x="1128.5" y="722.5" width="20" height="17" fill="#e1e1e1" stroke="#adadad"/>
<text x="1138.5" y="735" font-size="11.5" fill="#000" text-anchor="middle" font-weight="normal" font-family='"Liberation Sans", sans-serif' >0</text>
<rect x="1151.5" y="722.5" width="25" height="17" fill="#cce4f7" stroke="#3c7fb1"/>
<text x="1164.0" y="735" font-size="11.5" fill="#000" text-anchor="middle" font-weight="normal" font-family='"Liberation Sans", sans-serif' >DC</text>
<rect x="1179.5" y="722.5" width="16" height="17" fill="#e1e1e1" stroke="#adadad"/>
<text x="1187.5" y="735" font-size="11.5" fill="#000" text-anchor="middle" font-weight="normal" font-family='"Liberation Sans", sans-serif' >-</text>
<rect x="1234.5" y="720.5" width="37" height="17" fill="#e1e1e1" stroke="#adadad"/>
<text x="1253.0" y="733" font-size="11.5" fill="#000" text-anchor="middle" font-weight="normal" font-family='"Liberation Sans", sans-serif' >Single</text>
<rect x="1274.5" y="720.5" width="39" height="17" fill="#e1e1e1" stroke="#adadad"/>
<text x="1294.0" y="733" font-size="11.5" fill="#000" text-anchor="middle" font-weight="normal" font-family='"Liberation Sans", sans-serif' >Normal</text>
<rect x="1316.5" y="720.5" width="28" height="17" fill="#e1e1e1" stroke="#adadad"/>
<text x="1330.5" y="733" font-size="11.5" fill="#000" text-anchor="middle" font-weight="normal" font-family='"Liberation Sans", sans-serif' >Auto</text>
<rect x="1347.5" y="720.5" width="24" height="17" fill="#cce4f7" stroke="#3c7fb1"/>
<text x="1359.5" y="733" font-size="11.5" fill="#000" text-anchor="middle" font-weight="normal" font-family='"Liberation Sans", sans-serif' >None</text>
<circle cx="1083" cy="727" r="5.5" fill="#f6f6f6" stroke="#ccc"/><circle cx="1083" cy="727" r="3" fill="#777"/>
<circle cx="1218" cy="729" r="5.5" fill="#f6f6f6" stroke="#ccc"/><circle cx="1218" cy="729" r="3" fill="#777"/>
<rect x="829" y="728" width="537" height="8" fill="#1a4a66" fill-opacity="0.55"/>
</svg></body></html>
